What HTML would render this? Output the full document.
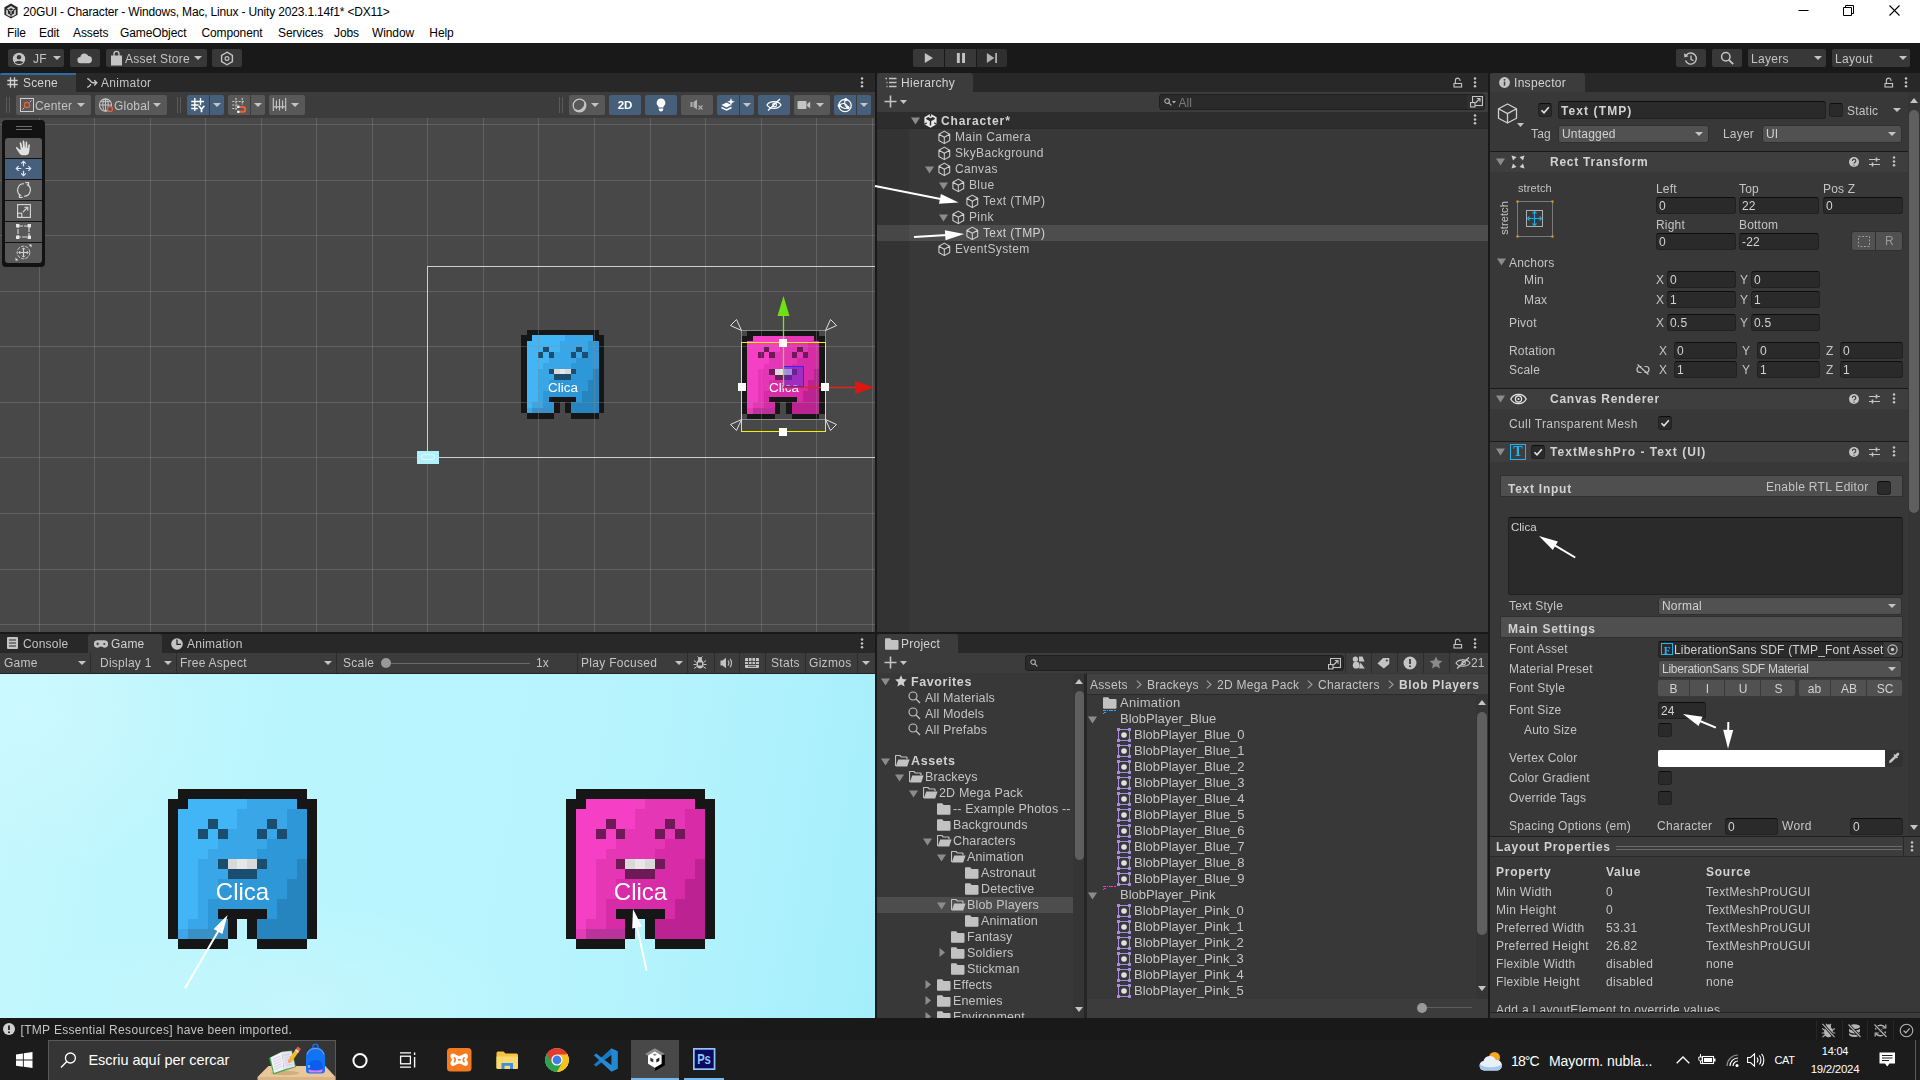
<!DOCTYPE html>
<html><head><meta charset="utf-8"><title>Unity Editor</title>
<style>
html,body{margin:0;padding:0}
body{width:1920px;height:1080px;position:relative;overflow:hidden;background:#191919;font-family:"Liberation Sans",sans-serif;font-size:12px}
body div,body span,body svg{position:absolute;box-sizing:border-box}
body span{white-space:pre}
.b{font-weight:bold}
.clip{overflow:hidden}
.u{left:0;top:0;width:1920px;height:1080px;will-change:transform}
</style></head><body>

<!-- p1_chrome -->

<div style="left:0px;top:0px;width:1920px;height:43px;background:#ffffff;"></div>
<svg style="left:3px;top:3px;" width="16" height="16" viewBox="0 0 16 16"><path d="M8 0.6L14.6 4.3V11.7L8 15.4L1.4 11.7V4.3Z" fill="#2a2a2a"/><path d="M8 3L12.3 5.5 10.6 6.5 8 5 5.4 6.5 3.7 5.5Z M3.2 6.4L4.9 7.4V10.4L7.5 11.9V13.9L3.2 11.4Z M12.8 6.4V11.4L8.5 13.9V11.9L11.1 10.4V7.4Z" fill="#d8d8d8"/><path d="M8 8.2L5.6 6.8 M8 8.2L10.4 6.8 M8 8.2V11" stroke="#d8d8d8" stroke-width="1"/></svg>
<span class="lcd" style="left:23px;top:4px;color:#000;font-size:12px;line-height:16px;letter-spacing:-0.17px;">20GUI - Character - Windows, Mac, Linux - Unity 2023.1.14f1* &lt;DX11&gt;</span>
<span class="lcd" style="left:7px;top:25px;color:#000;font-size:12px;line-height:16px;width:18px;text-align:center;letter-spacing:-0.1px;">File</span>
<span class="lcd" style="left:39px;top:25px;color:#000;font-size:12px;line-height:16px;width:20px;text-align:center;letter-spacing:-0.1px;">Edit</span>
<span class="lcd" style="left:73px;top:25px;color:#000;font-size:12px;line-height:16px;width:33px;text-align:center;letter-spacing:-0.1px;">Assets</span>
<span class="lcd" style="left:120px;top:25px;color:#000;font-size:12px;line-height:16px;width:66px;text-align:center;letter-spacing:-0.1px;">GameObject</span>
<span class="lcd" style="left:200px;top:25px;color:#000;font-size:12px;line-height:16px;width:64px;text-align:center;letter-spacing:-0.1px;">Component</span>
<span class="lcd" style="left:278px;top:25px;color:#000;font-size:12px;line-height:16px;width:42px;text-align:center;letter-spacing:-0.1px;">Services</span>
<span class="lcd" style="left:334px;top:25px;color:#000;font-size:12px;line-height:16px;width:23px;text-align:center;letter-spacing:-0.1px;">Jobs</span>
<span class="lcd" style="left:371px;top:25px;color:#000;font-size:12px;line-height:16px;width:44px;text-align:center;letter-spacing:-0.1px;">Window</span>
<span class="lcd" style="left:429px;top:25px;color:#000;font-size:12px;line-height:16px;width:25px;text-align:center;letter-spacing:-0.1px;">Help</span>
<svg style="left:1798px;top:4px;" width="110" height="14" viewBox="0 0 110 14"><path d="M0.5 6.5H10.5" stroke="#000" stroke-width="1" fill="none"/><path d="M45.5 3.5H53.5V11.5H45.5Z M47.5 3.5V1.5H55.5V9.5H53.5" stroke="#000" stroke-width="1" fill="none"/><path d="M91.5 1.5L101.5 11.5M101.5 1.5L91.5 11.5" stroke="#000" stroke-width="1.1" fill="none"/></svg>
<div class="u">
<div style="left:0px;top:43px;width:1920px;height:30px;background:#191919;"></div>
<div style="left:8px;top:49px;width:56px;height:18px;background:#383838;border-radius:2px;"></div>
<svg style="left:12px;top:52px;" width="14" height="14" viewBox="0 0 14 14"><circle cx="7" cy="7" r="6.2" fill="#c4c4c4"/><circle cx="7" cy="5.3" r="2.2" fill="#383838"/><path d="M2.8 10.6C3.8 8.6 10.2 8.6 11.2 10.6C10 12.3 4 12.3 2.8 10.6Z" fill="#383838"/></svg>
<span style="left:33px;top:51px;color:#c4c4c4;font-size:12px;line-height:16px;letter-spacing:0.3px;">JF</span>
<svg style="left:53px;top:56px;" width="8" height="4" viewBox="0 0 8 4"><path d="M0 0H8L4.0 4Z" fill="#c4c4c4"/></svg>
<div style="left:70px;top:49px;width:30px;height:18px;background:#383838;border-radius:2px;"></div>
<svg style="left:77px;top:52px;" width="16" height="12" viewBox="0 0 16 12"><path d="M3.6 11.2A3.1 3.1 0 0 1 3.4 5A4.2 4.2 0 0 1 11.4 4.1A3.6 3.6 0 0 1 12.2 11.2Z" fill="#c4c4c4"/></svg>
<div style="left:106px;top:49px;width:101px;height:18px;background:#383838;border-radius:2px;"></div>
<svg style="left:110px;top:50px;" width="13" height="16" viewBox="0 0 13 16"><path d="M1 5.5H12V15.5H1Z" fill="#c4c4c4"/><path d="M4 6V3.8A2.5 2.5 0 0 1 9 3.8V6" stroke="#c4c4c4" stroke-width="1.3" fill="none"/></svg>
<span style="left:125px;top:51px;color:#c4c4c4;font-size:12px;line-height:16px;letter-spacing:0.27px;">Asset Store</span>
<svg style="left:194px;top:56px;" width="8" height="4" viewBox="0 0 8 4"><path d="M0 0H8L4.0 4Z" fill="#c4c4c4"/></svg>
<div style="left:212px;top:49px;width:30px;height:18px;background:#383838;border-radius:2px;"></div>
<svg style="left:220px;top:51px;" width="14" height="15" viewBox="0 0 14 15"><path d="M7 1.2L12.4 4.3V10.7L7 13.8L1.6 10.7V4.3Z" stroke="#c4c4c4" stroke-width="1.4" fill="none"/><circle cx="7" cy="7.5" r="1.9" stroke="#c4c4c4" stroke-width="1.2" fill="none"/></svg>
<div style="left:913px;top:49px;width:31px;height:18px;background:#383838;border-radius:2px 0 0 2px;"></div>
<div style="left:945px;top:49px;width:31px;height:18px;background:#383838;"></div>
<div style="left:977px;top:49px;width:30px;height:18px;background:#2f2f2f;border-radius:0 2px 2px 0;"></div>
<svg style="left:924px;top:52px;" width="12" height="12" viewBox="0 0 12 12"><path d="M0.800 1L9 6L0.800 11Z" fill="#c4c4c4"/></svg>
<svg style="left:956px;top:52px;" width="12" height="12" viewBox="0 0 12 12"><path d="M0.900 1H3.800V11H0.900ZM6.100 1H9V11H6.100Z" fill="#c4c4c4"/></svg>
<svg style="left:986px;top:52px;" width="12" height="12" viewBox="0 0 12 12"><path d="M0.900 1L8.400 6L0.900 11Z" fill="#b0b0b0"/><path d="M9.200 1H11V11H9.200Z" fill="#b0b0b0"/></svg>
<div style="left:1676px;top:49px;width:30px;height:18px;background:#383838;border-radius:2px;"></div>
<svg style="left:1683px;top:51px;" width="16" height="16" viewBox="0 0 16 16"><path d="M3.2 4.2A5.6 5.6 0 1 1 2.5 9.6" stroke="#c4c4c4" stroke-width="1.4" fill="none"/><path d="M1 2.2L1.4 6.6L5.6 5.2Z" fill="#c4c4c4"/><path d="M8 4.6V8.3L10.5 9.8" stroke="#c4c4c4" stroke-width="1.3" fill="none"/></svg>
<div style="left:1712px;top:49px;width:30px;height:18px;background:#383838;border-radius:2px;"></div>
<svg style="left:1720px;top:51px;" width="15" height="15" viewBox="0 0 15 15"><circle cx="5.8" cy="5.8" r="4.2" stroke="#c4c4c4" stroke-width="1.5" fill="none"/><path d="M8.8 8.8L13.2 13.2" stroke="#c4c4c4" stroke-width="1.9"/></svg>
<div style="left:1748px;top:49px;width:78px;height:18px;background:#383838;border-radius:2px;"></div>
<span style="left:1751px;top:51px;color:#c4c4c4;font-size:12px;line-height:16px;letter-spacing:0.3px;">Layers</span>
<svg style="left:1814px;top:56px;" width="8" height="4" viewBox="0 0 8 4"><path d="M0 0H8L4.0 4Z" fill="#c4c4c4"/></svg>
<div style="left:1832px;top:49px;width:78px;height:18px;background:#383838;border-radius:2px;"></div>
<span style="left:1835px;top:51px;color:#c4c4c4;font-size:12px;line-height:16px;letter-spacing:0.3px;">Layout</span>
<svg style="left:1899px;top:56px;" width="8" height="4" viewBox="0 0 8 4"><path d="M0 0H8L4.0 4Z" fill="#c4c4c4"/></svg>

<!-- p2_scene -->

<div style="left:0px;top:73px;width:875px;height:19px;background:#282828;"></div>
<div style="left:0px;top:73px;width:76px;height:19px;background:#3c3c3c;border-top:2px solid #2f6ca6;border-radius:2px 0 0 0;"></div>
<svg style="left:7px;top:77px;" width="11" height="11" viewBox="0 0 11 11"><path d="M3.5 0.300V10.700M7.500 0.300V10.700M0.300 3.500H10.700M0.300 7.500H10.700" stroke="#d0d0d0" stroke-width="1.35" fill="none"/></svg>
<span style="left:23px;top:75px;color:#d2d2d2;font-size:12px;line-height:16px;letter-spacing:0.15px;">Scene</span>
<svg style="left:86px;top:77px;" width="12" height="12" viewBox="0 0 12 12"><path d="M1.200 1.600C4.200 1.600 4 5.800 7 5.800H10.800M1.200 10.200C3 10.200 4 8.400 4.800 7.200M8.200 3.200L10.800 5.800L8.200 8.400" stroke="#c8c8c8" stroke-width="1.35" fill="none"/></svg>
<span style="left:101px;top:75px;color:#c4c4c4;font-size:12px;line-height:16px;letter-spacing:0.3px;">Animator</span>
<svg style="left:860px;top:77px;" width="4" height="12" viewBox="0 0 4 12"><circle cx="2" cy="1.6" r="1.25" fill="#c4c4c4"/><circle cx="2" cy="5.4" r="1.25" fill="#c4c4c4"/><circle cx="2" cy="9.2" r="1.25" fill="#c4c4c4"/></svg>
<div style="left:0px;top:92px;width:875px;height:26px;background:#3c3c3c;"></div>
<div style="left:6px;top:97px;width:1px;height:16px;background:#5a5a5a;"></div>
<div style="left:9px;top:97px;width:1px;height:16px;background:#5a5a5a;"></div>
<div style="left:16px;top:95px;width:75px;height:20px;background:#585858;border-radius:2px;"></div>
<svg style="left:19px;top:97px;" width="16" height="16" viewBox="0 0 16 16"><rect x="1.500" y="1.500" width="13" height="13" fill="none" stroke="#d0d0d0" stroke-width="1"/><path d="M3.500 12.500L12.500 3.500" stroke="#d0d0d0" stroke-width="0.9" stroke-dasharray="2.500 1"/><circle cx="8" cy="8" r="2.600" fill="#585858" stroke="#ef6238" stroke-width="1.2"/></svg>
<span style="left:35px;top:97.5px;color:#c4c4c4;font-size:12px;line-height:16px;letter-spacing:0.2px;">Center</span>
<svg style="left:77px;top:103px;" width="8" height="4" viewBox="0 0 8 4"><path d="M0 0H8L4.0 4Z" fill="#c4c4c4"/></svg>
<div style="left:95px;top:95px;width:72px;height:20px;background:#585858;border-radius:2px;"></div>
<svg style="left:98px;top:97px;" width="16" height="16" viewBox="0 0 16 16"><circle cx="7.500" cy="8" r="6.100" fill="none" stroke="#c4c4c4" stroke-width="1.1"/><ellipse cx="7.500" cy="8" rx="2.700" ry="6.100" fill="none" stroke="#c4c4c4" stroke-width="1"/><path d="M1.400 8H13.600M7.500 1.900V14.100M2.600 4.700H12.400" stroke="#c4c4c4" stroke-width="1" fill="none"/><circle cx="12" cy="12" r="2.500" fill="#585858" stroke="#ef6238" stroke-width="1.2"/></svg>
<span style="left:114px;top:97.5px;color:#c4c4c4;font-size:12px;line-height:16px;letter-spacing:0.2px;">Global</span>
<svg style="left:153px;top:103px;" width="8" height="4" viewBox="0 0 8 4"><path d="M0 0H8L4.0 4Z" fill="#c4c4c4"/></svg>
<div style="left:177px;top:97px;width:1px;height:16px;background:#5a5a5a;"></div>
<div style="left:180px;top:97px;width:1px;height:16px;background:#5a5a5a;"></div>
<div style="left:187px;top:95px;width:22px;height:20px;background:#46607c;border-radius:2px 0 0 2px;"></div>
<div style="left:210px;top:95px;width:14px;height:20px;background:#46607c;border-radius:0 2px 2px 0;"></div>
<svg style="left:190px;top:97px;" width="16" height="16" viewBox="0 0 16 16"><path d="M4.800 1V14M10.500 1V8.500M1.200 4.500H14M1.200 8H8.500M1.200 11.500H7.800" stroke="#fff" stroke-width="1.35" fill="none"/><path d="M8.700 8.800L11.500 12.200L14.300 8.800M11.500 12.200V15.200" stroke="#46607c" stroke-width="3.400" fill="none"/><path d="M8.700 8.800L11.500 12.200L14.300 8.800M11.500 12.200V15.200" stroke="#fff" stroke-width="1.700" fill="none"/></svg>
<svg style="left:213px;top:103px;" width="8" height="4" viewBox="0 0 8 4"><path d="M0 0H8L4.0 4Z" fill="#c4c4c4"/></svg>
<div style="left:228px;top:95px;width:22px;height:20px;background:#585858;border-radius:2px 0 0 2px;"></div>
<div style="left:251px;top:95px;width:14px;height:20px;background:#585858;border-radius:0 2px 2px 0;"></div>
<svg style="left:231px;top:97px;" width="16" height="16" viewBox="0 0 16 16"><path d="M5 1V13.500M11.300 1V8M1.200 4.500H13.800M1.200 8H8M1.200 11.500H6" stroke="#c4c4c4" stroke-width="1.2" fill="none" stroke-dasharray="2.200 1"/><path d="M8 10H11.800A2.400 2.400 0 0 1 11.800 14.800H8" stroke="#ef6238" stroke-width="1.900" fill="none"/><rect x="6.200" y="8.800" width="2.200" height="2.200" fill="#fff"/><rect x="6.200" y="13.700" width="2.200" height="2.200" fill="#fff"/></svg>
<svg style="left:254px;top:103px;" width="8" height="4" viewBox="0 0 8 4"><path d="M0 0H8L4.0 4Z" fill="#c4c4c4"/></svg>
<div style="left:269px;top:95px;width:36px;height:20px;background:#585858;border-radius:2px;"></div>
<svg style="left:272px;top:97px;" width="16" height="16" viewBox="0 0 16 16"><path d="M1.300 1V14M13.700 1V14M4.400 3.500V12M7.500 2V13.500M10.600 3.500V12M1.300 9.800H13.700" stroke="#c4c4c4" stroke-width="1.15" fill="none"/></svg>
<svg style="left:291px;top:103px;" width="8" height="4" viewBox="0 0 8 4"><path d="M0 0H8L4.0 4Z" fill="#c4c4c4"/></svg>
<div style="left:559px;top:97px;width:1px;height:16px;background:#5a5a5a;"></div>
<div style="left:562px;top:97px;width:1px;height:16px;background:#5a5a5a;"></div>
<div style="left:569px;top:95px;width:36px;height:20px;background:#585858;border-radius:2px;"></div>
<svg style="left:572px;top:98px;" width="15" height="15" viewBox="0 0 15 15"><circle cx="7.5" cy="7.5" r="6.3" fill="none" stroke="#c4c4c4" stroke-width="1.3"/><path d="M12.8 4.5A6.3 6.3 0 0 1 2.6 11.6A7 7 0 0 0 12.8 4.5Z" fill="#c4c4c4" stroke="#c4c4c4" stroke-width="1.2"/></svg>
<svg style="left:591px;top:103px;" width="8" height="4" viewBox="0 0 8 4"><path d="M0 0H8L4.0 4Z" fill="#c4c4c4"/></svg>
<div style="left:609px;top:95px;width:32px;height:20px;background:#46607c;border-radius:2px;"></div>
<span style="left:609px;top:97px;color:#fff;font-size:12px;line-height:16px;width:32px;text-align:center;font-weight:bold;font-size:11.5px;">2D</span>
<div style="left:645px;top:95px;width:32px;height:20px;background:#46607c;border-radius:2px;"></div>
<svg style="left:654px;top:97px;" width="14" height="16" viewBox="0 0 14 16"><path d="M7 1.5A4.3 4.3 0 0 1 9.5 9.3V10.5H4.5V9.3A4.3 4.3 0 0 1 7 1.5Z" fill="#fff"/><path d="M4.8 11.6H9.2V12.3A2.2 2.2 0 0 1 4.8 12.3Z" fill="#fff"/></svg>
<div style="left:681px;top:95px;width:32px;height:20px;background:#585858;border-radius:2px;"></div>
<svg style="left:690px;top:99px;" width="14" height="12" viewBox="0 0 14 12"><path d="M0.5 3H2.5V8H0.5Z M3.5 3L7 0.5V10.5L3.5 8Z" fill="#b0b0b0"/><path d="M8.5 6.5L12.5 10.5M12.5 6.5L8.5 10.5" stroke="#b0b0b0" stroke-width="1.1"/></svg>
<div style="left:717px;top:95px;width:22px;height:20px;background:#46607c;border-radius:2px 0 0 2px;"></div>
<div style="left:740px;top:95px;width:14px;height:20px;background:#46607c;border-radius:0 2px 2px 0;"></div>
<svg style="left:720px;top:98px;" width="16" height="14" viewBox="0 0 16 14"><path d="M1.5 7L6.5 4.5L11.5 7L6.5 9.5Z" fill="#fff"/><path d="M1.5 9.5L6.5 12L11.5 9.5" stroke="#fff" stroke-width="1.4" fill="none"/><path d="M11 0L12 2.8L14.8 3.8L12 4.8L11 7.6L10 4.8L7.2 3.8L10 2.8Z" fill="#fff"/></svg>
<svg style="left:743px;top:103px;" width="8" height="4" viewBox="0 0 8 4"><path d="M0 0H8L4.0 4Z" fill="#c4c4c4"/></svg>
<div style="left:758px;top:95px;width:32px;height:20px;background:#46607c;border-radius:2px;"></div>
<svg style="left:766px;top:98px;" width="16" height="14" viewBox="0 0 16 14"><path d="M1 7C3.5 2.6 12.5 2.6 15 7C12.5 11.4 3.5 11.4 1 7Z" fill="none" stroke="#fff" stroke-width="1.2"/><circle cx="8.6" cy="7" r="1.9" fill="none" stroke="#fff" stroke-width="1.1"/><path d="M2 12.5L14 1" stroke="#fff" stroke-width="1.3"/></svg>
<div style="left:794px;top:95px;width:36px;height:20px;background:#585858;border-radius:2px;"></div>
<svg style="left:797px;top:100px;" width="14" height="10" viewBox="0 0 14 10"><rect x="0.5" y="1" width="9" height="8" rx="1" fill="#c4c4c4"/><path d="M10.2 4L13.2 1.5V8.5L10.2 6Z" fill="#c4c4c4"/></svg>
<svg style="left:816px;top:103px;" width="8" height="4" viewBox="0 0 8 4"><path d="M0 0H8L4.0 4Z" fill="#c4c4c4"/></svg>
<div style="left:834px;top:95px;width:22px;height:20px;background:#46607c;border-radius:2px 0 0 2px;"></div>
<div style="left:857px;top:95px;width:14px;height:20px;background:#46607c;border-radius:0 2px 2px 0;"></div>
<svg style="left:837px;top:97px;" width="16" height="16" viewBox="0 0 16 16"><circle cx="8" cy="8.5" r="6.2" fill="none" stroke="#fff" stroke-width="1.3"/><path d="M2 8.5C5 5.5 9 5.5 11 10.5 M8.5 2.5C6.5 6 8 10 11 10.5 M2.5 8.5C6 12 9 12 11 10.5" stroke="#fff" stroke-width="1.1" fill="none"/><circle cx="8.8" cy="2.6" r="1.6" fill="#fff"/><circle cx="2.2" cy="8.6" r="1.6" fill="#fff"/><circle cx="11" cy="10.6" r="1.6" fill="#fff"/></svg>
<svg style="left:860px;top:103px;" width="8" height="4" viewBox="0 0 8 4"><path d="M0 0H8L4.0 4Z" fill="#c4c4c4"/></svg>
<div style="left:0px;top:118px;width:875px;height:514px;background:#484848;overflow:hidden;"></div>
<svg style="left:521px;top:329px;" width="85" height="91" viewBox="0 0 85 91" shape-rendering="crispEdges"><rect x="6" y="1" width="72" height="5" fill="#161616"/><rect x="0" y="6" width="11" height="6" fill="#161616"/><rect x="11" y="6" width="33" height="6" fill="#42b5f6"/><rect x="44" y="6" width="28" height="6" fill="#38a6e7"/><rect x="72" y="6" width="11" height="6" fill="#161616"/><rect x="0" y="12" width="6" height="6" fill="#161616"/><rect x="6" y="12" width="33" height="6" fill="#42b5f6"/><rect x="39" y="12" width="28" height="6" fill="#38a6e7"/><rect x="67" y="12" width="11" height="6" fill="#2e97d8"/><rect x="78" y="12" width="5" height="6" fill="#161616"/><rect x="0" y="18" width="6" height="5" fill="#161616"/><rect x="6" y="18" width="16" height="5" fill="#42b5f6"/><rect x="22" y="18" width="6" height="5" fill="#1b4e6e"/><rect x="28" y="18" width="11" height="5" fill="#42b5f6"/><rect x="39" y="18" width="16" height="5" fill="#38a6e7"/><rect x="55" y="18" width="6" height="5" fill="#1b4e6e"/><rect x="61" y="18" width="6" height="5" fill="#38a6e7"/><rect x="67" y="18" width="11" height="5" fill="#2e97d8"/><rect x="78" y="18" width="5" height="5" fill="#161616"/><rect x="0" y="23" width="6" height="6" fill="#161616"/><rect x="6" y="23" width="11" height="6" fill="#42b5f6"/><rect x="17" y="23" width="5" height="6" fill="#1b4e6e"/><rect x="22" y="23" width="6" height="6" fill="#42b5f6"/><rect x="28" y="23" width="5" height="6" fill="#1b4e6e"/><rect x="33" y="23" width="17" height="6" fill="#38a6e7"/><rect x="50" y="23" width="5" height="6" fill="#1b4e6e"/><rect x="55" y="23" width="6" height="6" fill="#38a6e7"/><rect x="61" y="23" width="6" height="6" fill="#1b4e6e"/><rect x="67" y="23" width="11" height="6" fill="#2e97d8"/><rect x="78" y="23" width="5" height="6" fill="#161616"/><rect x="0" y="29" width="6" height="5" fill="#161616"/><rect x="6" y="29" width="22" height="5" fill="#42b5f6"/><rect x="28" y="29" width="27" height="5" fill="#38a6e7"/><rect x="55" y="29" width="23" height="5" fill="#2e97d8"/><rect x="78" y="29" width="5" height="5" fill="#161616"/><rect x="0" y="34" width="6" height="6" fill="#161616"/><rect x="6" y="34" width="16" height="6" fill="#42b5f6"/><rect x="22" y="34" width="28" height="6" fill="#38a6e7"/><rect x="50" y="34" width="28" height="6" fill="#2e97d8"/><rect x="78" y="34" width="5" height="6" fill="#161616"/><rect x="0" y="40" width="6" height="5" fill="#161616"/><rect x="6" y="40" width="11" height="5" fill="#42b5f6"/><rect x="17" y="40" width="11" height="5" fill="#38a6e7"/><rect x="28" y="40" width="5" height="5" fill="#1b4e6e"/><rect x="33" y="40" width="6" height="5" fill="#d9d9d9"/><rect x="39" y="40" width="5" height="5" fill="#e7e7e7"/><rect x="44" y="40" width="6" height="5" fill="#d9d9d9"/><rect x="50" y="40" width="5" height="5" fill="#1b4e6e"/><rect x="55" y="40" width="17" height="5" fill="#2e97d8"/><rect x="72" y="40" width="6" height="5" fill="#2684be"/><rect x="78" y="40" width="5" height="5" fill="#161616"/><rect x="0" y="45" width="6" height="6" fill="#161616"/><rect x="6" y="45" width="11" height="6" fill="#42b5f6"/><rect x="17" y="45" width="16" height="6" fill="#38a6e7"/><rect x="33" y="45" width="17" height="6" fill="#1b4e6e"/><rect x="50" y="45" width="22" height="6" fill="#2e97d8"/><rect x="72" y="45" width="6" height="6" fill="#2684be"/><rect x="78" y="45" width="5" height="6" fill="#161616"/><rect x="0" y="51" width="6" height="5" fill="#161616"/><rect x="6" y="51" width="11" height="5" fill="#42b5f6"/><rect x="17" y="51" width="11" height="5" fill="#38a6e7"/><rect x="28" y="51" width="39" height="5" fill="#2e97d8"/><rect x="67" y="51" width="11" height="5" fill="#2684be"/><rect x="78" y="51" width="5" height="5" fill="#161616"/><rect x="0" y="56" width="6" height="6" fill="#161616"/><rect x="6" y="56" width="11" height="6" fill="#42b5f6"/><rect x="17" y="56" width="11" height="6" fill="#38a6e7"/><rect x="28" y="56" width="39" height="6" fill="#2e97d8"/><rect x="67" y="56" width="11" height="6" fill="#2684be"/><rect x="78" y="56" width="5" height="6" fill="#161616"/><rect x="0" y="62" width="6" height="6" fill="#161616"/><rect x="6" y="62" width="11" height="6" fill="#42b5f6"/><rect x="17" y="62" width="5" height="6" fill="#38a6e7"/><rect x="22" y="62" width="39" height="6" fill="#2e97d8"/><rect x="61" y="62" width="17" height="6" fill="#2684be"/><rect x="78" y="62" width="5" height="6" fill="#161616"/><rect x="0" y="68" width="6" height="5" fill="#161616"/><rect x="6" y="68" width="11" height="5" fill="#42b5f6"/><rect x="17" y="68" width="5" height="5" fill="#38a6e7"/><rect x="22" y="68" width="6" height="5" fill="#2e97d8"/><rect x="28" y="68" width="27" height="5" fill="#161616"/><rect x="55" y="68" width="6" height="5" fill="#2e97d8"/><rect x="61" y="68" width="17" height="5" fill="#2684be"/><rect x="78" y="68" width="5" height="5" fill="#161616"/><rect x="0" y="73" width="6" height="6" fill="#161616"/><rect x="6" y="73" width="5" height="6" fill="#42b5f6"/><rect x="11" y="73" width="11" height="6" fill="#38a6e7"/><rect x="22" y="73" width="11" height="6" fill="#2e97d8"/><rect x="33" y="73" width="6" height="6" fill="#161616"/><rect x="44" y="73" width="6" height="6" fill="#161616"/><rect x="50" y="73" width="28" height="6" fill="#2684be"/><rect x="78" y="73" width="5" height="6" fill="#161616"/><rect x="0" y="79" width="6" height="5" fill="#161616"/><rect x="6" y="79" width="5" height="5" fill="#3ea6e4"/><rect x="11" y="79" width="22" height="5" fill="#3990c6"/><rect x="33" y="79" width="6" height="5" fill="#161616"/><rect x="44" y="79" width="6" height="5" fill="#161616"/><rect x="50" y="79" width="28" height="5" fill="#2684be"/><rect x="78" y="79" width="5" height="5" fill="#161616"/><rect x="6" y="84" width="27" height="6" fill="#161616"/><rect x="50" y="84" width="28" height="6" fill="#161616"/></svg>
<svg style="left:741px;top:330px;" width="85" height="91" viewBox="0 0 85 91" shape-rendering="crispEdges"><rect x="6" y="0" width="72" height="6" fill="#161616"/><rect x="1" y="6" width="11" height="5" fill="#161616"/><rect x="12" y="6" width="33" height="5" fill="#f540c5"/><rect x="45" y="6" width="28" height="5" fill="#e536b5"/><rect x="73" y="6" width="11" height="5" fill="#161616"/><rect x="1" y="11" width="5" height="6" fill="#161616"/><rect x="6" y="11" width="33" height="6" fill="#f540c5"/><rect x="39" y="11" width="28" height="6" fill="#e536b5"/><rect x="67" y="11" width="11" height="6" fill="#d82ba8"/><rect x="78" y="11" width="6" height="6" fill="#161616"/><rect x="1" y="17" width="5" height="5" fill="#161616"/><rect x="6" y="17" width="17" height="5" fill="#f540c5"/><rect x="23" y="17" width="5" height="5" fill="#6e1a56"/><rect x="28" y="17" width="11" height="5" fill="#f540c5"/><rect x="39" y="17" width="17" height="5" fill="#e536b5"/><rect x="56" y="17" width="6" height="5" fill="#6e1a56"/><rect x="62" y="17" width="5" height="5" fill="#e536b5"/><rect x="67" y="17" width="11" height="5" fill="#d82ba8"/><rect x="78" y="17" width="6" height="5" fill="#161616"/><rect x="1" y="22" width="5" height="6" fill="#161616"/><rect x="6" y="22" width="11" height="6" fill="#f540c5"/><rect x="17" y="22" width="6" height="6" fill="#6e1a56"/><rect x="23" y="22" width="5" height="6" fill="#f540c5"/><rect x="28" y="22" width="6" height="6" fill="#6e1a56"/><rect x="34" y="22" width="17" height="6" fill="#e536b5"/><rect x="51" y="22" width="5" height="6" fill="#6e1a56"/><rect x="56" y="22" width="6" height="6" fill="#e536b5"/><rect x="62" y="22" width="5" height="6" fill="#6e1a56"/><rect x="67" y="22" width="11" height="6" fill="#d82ba8"/><rect x="78" y="22" width="6" height="6" fill="#161616"/><rect x="1" y="28" width="5" height="6" fill="#161616"/><rect x="6" y="28" width="22" height="6" fill="#f540c5"/><rect x="28" y="28" width="28" height="6" fill="#e536b5"/><rect x="56" y="28" width="22" height="6" fill="#d82ba8"/><rect x="78" y="28" width="6" height="6" fill="#161616"/><rect x="1" y="34" width="5" height="5" fill="#161616"/><rect x="6" y="34" width="17" height="5" fill="#f540c5"/><rect x="23" y="34" width="28" height="5" fill="#e536b5"/><rect x="51" y="34" width="27" height="5" fill="#d82ba8"/><rect x="78" y="34" width="6" height="5" fill="#161616"/><rect x="1" y="39" width="5" height="6" fill="#161616"/><rect x="6" y="39" width="11" height="6" fill="#f540c5"/><rect x="17" y="39" width="11" height="6" fill="#e536b5"/><rect x="28" y="39" width="6" height="6" fill="#6e1a56"/><rect x="34" y="39" width="5" height="6" fill="#d9d9d9"/><rect x="39" y="39" width="6" height="6" fill="#e7e7e7"/><rect x="45" y="39" width="6" height="6" fill="#d9d9d9"/><rect x="51" y="39" width="5" height="6" fill="#6e1a56"/><rect x="56" y="39" width="17" height="6" fill="#d82ba8"/><rect x="73" y="39" width="5" height="6" fill="#bc2291"/><rect x="78" y="39" width="6" height="6" fill="#161616"/><rect x="1" y="45" width="5" height="5" fill="#161616"/><rect x="6" y="45" width="11" height="5" fill="#f540c5"/><rect x="17" y="45" width="17" height="5" fill="#e536b5"/><rect x="34" y="45" width="17" height="5" fill="#6e1a56"/><rect x="51" y="45" width="22" height="5" fill="#d82ba8"/><rect x="73" y="45" width="5" height="5" fill="#bc2291"/><rect x="78" y="45" width="6" height="5" fill="#161616"/><rect x="1" y="50" width="5" height="6" fill="#161616"/><rect x="6" y="50" width="11" height="6" fill="#f540c5"/><rect x="17" y="50" width="11" height="6" fill="#e536b5"/><rect x="28" y="50" width="39" height="6" fill="#d82ba8"/><rect x="67" y="50" width="11" height="6" fill="#bc2291"/><rect x="78" y="50" width="6" height="6" fill="#161616"/><rect x="1" y="56" width="5" height="5" fill="#161616"/><rect x="6" y="56" width="11" height="5" fill="#f540c5"/><rect x="17" y="56" width="11" height="5" fill="#e536b5"/><rect x="28" y="56" width="39" height="5" fill="#d82ba8"/><rect x="67" y="56" width="11" height="5" fill="#bc2291"/><rect x="78" y="56" width="6" height="5" fill="#161616"/><rect x="1" y="61" width="5" height="6" fill="#161616"/><rect x="6" y="61" width="11" height="6" fill="#f540c5"/><rect x="17" y="61" width="6" height="6" fill="#e536b5"/><rect x="23" y="61" width="39" height="6" fill="#d82ba8"/><rect x="62" y="61" width="16" height="6" fill="#bc2291"/><rect x="78" y="61" width="6" height="6" fill="#161616"/><rect x="1" y="67" width="5" height="5" fill="#161616"/><rect x="6" y="67" width="11" height="5" fill="#f540c5"/><rect x="17" y="67" width="6" height="5" fill="#e536b5"/><rect x="23" y="67" width="5" height="5" fill="#d82ba8"/><rect x="28" y="67" width="28" height="5" fill="#161616"/><rect x="56" y="67" width="6" height="5" fill="#d82ba8"/><rect x="62" y="67" width="16" height="5" fill="#bc2291"/><rect x="78" y="67" width="6" height="5" fill="#161616"/><rect x="1" y="72" width="5" height="6" fill="#161616"/><rect x="6" y="72" width="6" height="6" fill="#f540c5"/><rect x="12" y="72" width="11" height="6" fill="#e536b5"/><rect x="23" y="72" width="11" height="6" fill="#d82ba8"/><rect x="34" y="72" width="5" height="6" fill="#161616"/><rect x="45" y="72" width="6" height="6" fill="#161616"/><rect x="51" y="72" width="27" height="6" fill="#bc2291"/><rect x="78" y="72" width="6" height="6" fill="#161616"/><rect x="1" y="78" width="5" height="6" fill="#161616"/><rect x="6" y="78" width="6" height="6" fill="#e23cb6"/><rect x="12" y="78" width="22" height="6" fill="#b9339b"/><rect x="34" y="78" width="5" height="6" fill="#161616"/><rect x="45" y="78" width="6" height="6" fill="#161616"/><rect x="51" y="78" width="27" height="6" fill="#bc2291"/><rect x="78" y="78" width="6" height="6" fill="#161616"/><rect x="6" y="84" width="28" height="5" fill="#161616"/><rect x="51" y="84" width="27" height="5" fill="#161616"/></svg>
<span style="left:522px;top:377.5px;color:#fff;font-size:13.4px;line-height:20px;width:82px;text-align:center;">Clica</span>
<span style="left:743px;top:377.5px;color:#fff;font-size:13.4px;line-height:20px;width:82px;text-align:center;">Clica</span>
<svg style="left:0px;top:118px;" width="875" height="514" viewBox="0 0 875 514"><g stroke="#8c8c8c" stroke-opacity="0.36" stroke-width="1" fill="none" shape-rendering="crispEdges"><path d="M39.5 0V514"/><path d="M94.5 0V514"/><path d="M150.5 0V514"/><path d="M205.5 0V514"/><path d="M261.5 0V514"/><path d="M316.5 0V514"/><path d="M372.5 0V514"/><path d="M427.5 0V514"/><path d="M483.5 0V514"/><path d="M538.5 0V514"/><path d="M594.5 0V514"/><path d="M650.5 0V514"/><path d="M705.5 0V514"/><path d="M761.5 0V514"/><path d="M816.5 0V514"/><path d="M872.5 0V514"/><path d="M0 6.5H875"/><path d="M0 62.5H875"/><path d="M0 117.5H875"/><path d="M0 173.5H875"/><path d="M0 228.5H875"/><path d="M0 284.5H875"/><path d="M0 339.5H875"/><path d="M0 395.5H875"/><path d="M0 451.5H875"/><path d="M0 506.5H875"/></g></svg>
<svg style="left:420px;top:260px;" width="455" height="210" viewBox="0 0 455 210"><path d="M455 6.5H7.5V197.5H455" stroke="#d0d0d0" stroke-width="1" fill="none" shape-rendering="crispEdges"/></svg>
<div style="left:417px;top:451px;width:22px;height:13px;background:#b2f1fb;"></div>
<div style="left:421px;top:454px;width:14px;height:6px;border:1px solid #dcfbff;border-radius:3px;"></div>
<svg style="left:725px;top:290px;" width="150" height="150" viewBox="0 0 150 150"><g shape-rendering="crispEdges" fill="none"><rect x="16.5" y="40.5" width="84" height="89" stroke="#8a8a8a"/><rect x="16.5" y="52.5" width="84" height="89" stroke="#f5f000"/></g><g stroke="#e0e0e0" stroke-width="1" fill="none"><path d="M16.5 40.5L5.5 35.5L11.5 29.5Z"/><path d="M100.5 40.5L111.5 35.5L105.5 29.5Z"/><path d="M16.5 129.5L5.5 134.5L11.5 140.5Z"/><path d="M100.5 129.5L111.5 134.5L105.5 140.5Z"/></g><rect x="58.5" y="76.5" width="20" height="20" fill="#5a30e0" fill-opacity="0.45" stroke="#2a2aff"/><path d="M58.5 97V24" stroke="#7be330" stroke-width="1.3"/><path d="M58.5 6L64.5 26H52.5Z" fill="#6fe016"/><path d="M58 97.5H132" stroke="#e0261c" stroke-width="1.3"/><path d="M149 97.5L130 91V104Z" fill="#e0160e"/><g fill="#fff" shape-rendering="crispEdges"><rect x="54" y="49" width="8" height="8"/><rect x="13" y="93" width="8" height="8"/><rect x="96" y="93" width="8" height="8"/><rect x="54" y="138" width="8" height="8"/></g></svg>
<div style="left:2px;top:120px;width:43px;height:147px;background:#121212;border-radius:4px;"></div>
<div style="left:16px;top:126px;width:16px;height:1px;background:#6e6e6e;"></div>
<div style="left:16px;top:129px;width:16px;height:1px;background:#6e6e6e;"></div>
<div style="left:5px;top:138px;width:37px;height:20px;background:#585858;border-radius:3px 3px 0 0"></div>
<div style="left:5px;top:159px;width:37px;height:20px;background:#46607c;border-radius:0"></div>
<div style="left:5px;top:180px;width:37px;height:20px;background:#585858;border-radius:0"></div>
<div style="left:5px;top:201px;width:37px;height:20px;background:#585858;border-radius:0"></div>
<div style="left:5px;top:222px;width:37px;height:20px;background:#585858;border-radius:0"></div>
<div style="left:5px;top:243px;width:37px;height:20px;background:#585858;border-radius:0 0 3px 3px"></div>
<svg style="left:15px;top:140px;" width="17" height="16" viewBox="0 0 17 16"><path d="M4.2 9.2L2.2 7.2C1.2 6.4 0.4 7.6 1.2 8.6L4.5 13.5C5.3 14.7 6.3 15.3 7.8 15.3H10.6C12.8 15.3 14 13.8 14.2 11.8L14.9 5.2C15 4 13.6 3.8 13.4 5L12.8 8.2H12.4L12.2 2.4C12.2 1.2 10.6 1.2 10.6 2.4L10.4 7.8H10L9.3 1.4C9.2 0.2 7.6 0.4 7.7 1.6L8 7.8H7.6L6.2 2.8C5.9 1.7 4.4 2.1 4.7 3.3L5.8 9.8Z" fill="#e0e0e0"/></svg>
<svg style="left:15px;top:160px;" width="17" height="17" viewBox="0 0 17 17"><path d="M8.500 1.500V6.300M8.500 10.700V15.500M1.500 8.500H6.300M10.700 8.500H15.500" stroke="#dde6f0" stroke-width="1.2"/><path d="M6.200 3.600L8.500 1.300L10.800 3.600M6.200 13.400L8.500 15.700L10.800 13.400M3.600 6.200L1.300 8.500L3.600 10.800M13.400 6.200L15.700 8.500L13.400 10.800" stroke="#dde6f0" stroke-width="1.2" fill="none"/></svg>
<svg style="left:16px;top:182px;" width="16" height="16" viewBox="0 0 16 16"><path d="M5.200 13.600A6.200 6.200 0 0 1 8 1.800M10.800 2.400A6.200 6.200 0 0 1 8 14.200" stroke="#d8d8d8" stroke-width="1.15" fill="none"/><path d="M9.300 0.600H12.600V3.900M6.700 15.400H3.400V12.100" stroke="#d8d8d8" stroke-width="1.15" fill="none"/></svg>
<svg style="left:17px;top:204px;" width="14" height="14" viewBox="0 0 14 14"><rect x="0.600" y="0.600" width="12.800" height="12.800" fill="none" stroke="#d8d8d8" stroke-width="1.1"/><rect x="0.600" y="9.200" width="4.200" height="4.200" fill="none" stroke="#d8d8d8" stroke-width="1.1"/><path d="M6 8L10.800 3.200M7.300 3.200H10.800V6.700" stroke="#d8d8d8" stroke-width="1.1" fill="none"/></svg>
<svg style="left:16px;top:224px;" width="15" height="15" viewBox="0 0 15 15"><path d="M2 2H13V13H2Z" stroke="#d8d8d8" stroke-width="1.1" fill="none" stroke-dasharray="5 1"/><g fill="#e6e6e6"><rect x="0" y="0" width="3.4" height="3.4"/><rect x="11.6" y="0" width="3.4" height="3.4"/><rect x="0" y="11.6" width="3.4" height="3.4"/><rect x="11.6" y="11.6" width="3.4" height="3.4"/></g></svg>
<svg style="left:15px;top:244px;" width="17" height="17" viewBox="0 0 17 17"><circle cx="8.500" cy="8.500" r="6.300" stroke="#d0d0d0" stroke-width="1" fill="none" stroke-dasharray="3.200 1.200"/><path d="M8.500 4V13M4 8.500H13" stroke="#d0d0d0" stroke-width="1.200"/><path d="M7 5.300L8.500 3.800L10 5.300M7 11.700L8.500 13.200L10 11.700M5.300 7L3.800 8.500L5.300 10M11.700 7L13.200 8.500L11.700 10" stroke="#d0d0d0" stroke-width="1" fill="none"/><path d="M13.500 0.500H16.500V3.500Z M0.500 13.500V16.500H3.500Z" fill="#e0e0e0"/></svg>

<!-- p3_hier -->

<div style="left:877px;top:73px;width:611px;height:19px;background:#282828;"></div>
<div style="left:877px;top:73px;width:96px;height:19px;background:#3c3c3c;border-radius:3px 3px 0 0;"></div>
<svg style="left:885px;top:77px;" width="12" height="11" viewBox="0 0 12 11"><path d="M4 1.5H11.5M4 5.5H11.5M4 9.5H11.5" stroke="#c4c4c4" stroke-width="1.3"/><path d="M0.5 1.5H2M1.5 5.5H2.5M1.5 9.5H2.5" stroke="#c4c4c4" stroke-width="1.3"/></svg>
<span style="left:901px;top:75px;color:#d2d2d2;font-size:12px;line-height:16px;letter-spacing:0.3px;">Hierarchy</span>
<svg style="left:1453px;top:77px;" width="10" height="11" viewBox="0 0 10 11"><rect x="1" y="6.5" width="7.600" height="3.500" fill="none" stroke="#c4c4c4" stroke-width="1.1"/><path d="M2.4 6.500V3.400A2.300 2.300 0 0 1 7 3.400V3.900" stroke="#c4c4c4" stroke-width="1.1" fill="none"/></svg>
<svg style="left:1473px;top:77px;" width="4" height="12" viewBox="0 0 4 12"><circle cx="2" cy="1.6" r="1.25" fill="#c4c4c4"/><circle cx="2" cy="5.4" r="1.25" fill="#c4c4c4"/><circle cx="2" cy="9.2" r="1.25" fill="#c4c4c4"/></svg>
<div style="left:877px;top:92px;width:611px;height:20px;background:#3c3c3c;"></div>
<svg style="left:884px;top:95px;" width="13" height="13" viewBox="0 0 13 13"><path d="M6.5 0.5V12.5M0.5 6.5H12.5" stroke="#c4c4c4" stroke-width="1.6"/></svg>
<svg style="left:900px;top:100px;" width="7" height="4" viewBox="0 0 7 4"><path d="M0 0H7L3.5 4Z" fill="#c4c4c4"/></svg>
<div style="left:1159px;top:94px;width:326px;height:16px;background:#2a2a2a;border-radius:3px;border:1px solid #1f1f1f;"></div>
<div style="left:1467px;top:95px;width:17px;height:14px;background:#303030;border-radius:0 2px 2px 0;"></div>
<svg style="left:1164px;top:98px;" width="8" height="8" viewBox="0 0 9 9"><circle cx="3.5" cy="3.5" r="2.6" stroke="#b0b0b0" stroke-width="1.2" fill="none"/><path d="M5.4 5.4L8.3 8.3" stroke="#b0b0b0" stroke-width="1.3"/></svg>
<svg style="left:1171.5px;top:101px;" width="4" height="3" viewBox="0 0 4 3"><path d="M0 0H4L2 2.500Z" fill="#b0b0b0"/></svg>
<span style="left:1178.5px;top:94.5px;color:#7c7c7c;font-size:12px;line-height:16px;">All</span>
<svg style="left:1470px;top:96px;" width="13" height="12" viewBox="0 0 13 12"><rect x="0.550" y="6.550" width="4.400" height="4.400" fill="none" stroke="#c4c4c4" stroke-width="1.1"/><path d="M2.550 6.500V0.550H12.450V9.450H5" fill="none" stroke="#c4c4c4" stroke-width="1.1"/><path d="M5.500 7L10 2.500M6.800 2.500H10V5.700" stroke="#c4c4c4" stroke-width="1.1" fill="none"/></svg>
<div style="left:877px;top:112px;width:611px;height:520px;background:#383838;"></div>
<div style="left:877px;top:112px;width:32px;height:520px;background:#333333;"></div>
<div style="left:877px;top:112px;width:611px;height:16px;background:#2d2d2d;"></div>
<div style="left:877px;top:128px;width:611px;height:1px;background:#2a2a2a;"></div>
<svg style="left:911px;top:117px;" width="9" height="8" viewBox="0 0 9 8"><path d="M0 0.5H9L4.5 7.5Z" fill="#8c8c8c"/></svg>
<svg style="left:923px;top:113px;" width="15" height="15" viewBox="0 0 15 15"><path d="M7.5 0.8L13.6 4.3V11.2L7.5 14.7L1.4 11.2V4.3Z" fill="#e8e8e8"/><path d="M7.5 7.8L3.6 5.5V4.9L5.3 3.9L7.5 5.2L9.7 3.9L11.4 4.9V5.5Z" fill="#2d2d2d"/><path d="M7.5 7.8V12.4M3.4 5.4L7.5 7.8L11.6 5.4" stroke="#2d2d2d" stroke-width="1.4" fill="none"/><path d="M7.5 0.8V3.4M1.4 11.2L3.8 9.8M13.6 11.2L11.2 9.8" stroke="#2d2d2d" stroke-width="1.3"/></svg>
<span style="left:941px;top:113px;color:#d2d2d2;font-size:12px;line-height:16px;font-weight:bold;letter-spacing:0.9px;">Character*</span>
<svg style="left:1473px;top:114px;" width="4" height="12" viewBox="0 0 4 12"><circle cx="2" cy="1.6" r="1.25" fill="#c4c4c4"/><circle cx="2" cy="5.4" r="1.25" fill="#c4c4c4"/><circle cx="2" cy="9.2" r="1.25" fill="#c4c4c4"/></svg>
<svg style="left:937px;top:130px;" width="14" height="15" viewBox="0 0 14 15"><path d="M7.300 1.100L12.700 4.200V10.500L7.300 13.600L1.900 10.500V4.200Z M1.900 4.200L7.300 7.300L12.700 4.200 M7.300 7.300V13.600" stroke="#d0d0d0" stroke-width="1.050" fill="none" stroke-linejoin="round"/></svg>
<span style="left:955px;top:128.5px;color:#c4c4c4;font-size:12px;line-height:16px;letter-spacing:0.36px;">Main Camera</span>
<svg style="left:937px;top:146px;" width="14" height="15" viewBox="0 0 14 15"><path d="M7.300 1.100L12.700 4.200V10.500L7.300 13.600L1.900 10.500V4.200Z M1.900 4.200L7.300 7.300L12.700 4.200 M7.300 7.300V13.600" stroke="#d0d0d0" stroke-width="1.050" fill="none" stroke-linejoin="round"/></svg>
<span style="left:955px;top:144.5px;color:#c4c4c4;font-size:12px;line-height:16px;letter-spacing:0.36px;">SkyBackground</span>
<svg style="left:925px;top:166px;" width="9" height="8" viewBox="0 0 9 8"><path d="M0 0.5H9L4.5 7.5Z" fill="#8c8c8c"/></svg>
<svg style="left:937px;top:162px;" width="14" height="15" viewBox="0 0 14 15"><path d="M7.300 1.100L12.700 4.200V10.500L7.300 13.600L1.900 10.500V4.200Z M1.900 4.200L7.300 7.300L12.700 4.200 M7.300 7.300V13.600" stroke="#d0d0d0" stroke-width="1.050" fill="none" stroke-linejoin="round"/></svg>
<span style="left:955px;top:160.5px;color:#c4c4c4;font-size:12px;line-height:16px;letter-spacing:0.36px;">Canvas</span>
<svg style="left:939px;top:182px;" width="9" height="8" viewBox="0 0 9 8"><path d="M0 0.5H9L4.5 7.5Z" fill="#8c8c8c"/></svg>
<svg style="left:951px;top:178px;" width="14" height="15" viewBox="0 0 14 15"><path d="M7.300 1.100L12.700 4.200V10.500L7.300 13.600L1.900 10.500V4.200Z M1.900 4.200L7.300 7.300L12.700 4.200 M7.300 7.300V13.600" stroke="#d0d0d0" stroke-width="1.050" fill="none" stroke-linejoin="round"/></svg>
<span style="left:969px;top:176.5px;color:#c4c4c4;font-size:12px;line-height:16px;letter-spacing:0.36px;">Blue</span>
<svg style="left:965px;top:194px;" width="14" height="15" viewBox="0 0 14 15"><path d="M7.300 1.100L12.700 4.200V10.500L7.300 13.600L1.900 10.500V4.200Z M1.900 4.200L7.300 7.300L12.700 4.200 M7.300 7.300V13.600" stroke="#d0d0d0" stroke-width="1.050" fill="none" stroke-linejoin="round"/></svg>
<span style="left:983px;top:192.5px;color:#c4c4c4;font-size:12px;line-height:16px;letter-spacing:0.36px;">Text (TMP)</span>
<svg style="left:939px;top:214px;" width="9" height="8" viewBox="0 0 9 8"><path d="M0 0.5H9L4.5 7.5Z" fill="#8c8c8c"/></svg>
<svg style="left:951px;top:210px;" width="14" height="15" viewBox="0 0 14 15"><path d="M7.300 1.100L12.700 4.200V10.500L7.300 13.600L1.900 10.500V4.200Z M1.900 4.200L7.300 7.300L12.700 4.200 M7.300 7.300V13.600" stroke="#d0d0d0" stroke-width="1.050" fill="none" stroke-linejoin="round"/></svg>
<span style="left:969px;top:208.5px;color:#c4c4c4;font-size:12px;line-height:16px;letter-spacing:0.36px;">Pink</span>
<div style="left:877px;top:225px;width:611px;height:16px;background:#4d4d4d;"></div>
<div style="left:877px;top:225px;width:32px;height:16px;background:#474747;"></div>
<svg style="left:965px;top:226px;" width="14" height="15" viewBox="0 0 14 15"><path d="M7.300 1.100L12.700 4.200V10.500L7.300 13.600L1.900 10.500V4.200Z M1.900 4.200L7.300 7.300L12.700 4.200 M7.300 7.300V13.600" stroke="#d0d0d0" stroke-width="1.050" fill="none" stroke-linejoin="round"/></svg>
<span style="left:983px;top:224.5px;color:#d2d2d2;font-size:12px;line-height:16px;letter-spacing:0.36px;">Text (TMP)</span>
<svg style="left:937px;top:242px;" width="14" height="15" viewBox="0 0 14 15"><path d="M7.300 1.100L12.700 4.200V10.500L7.300 13.600L1.900 10.500V4.200Z M1.900 4.200L7.300 7.300L12.700 4.200 M7.300 7.300V13.600" stroke="#d0d0d0" stroke-width="1.050" fill="none" stroke-linejoin="round"/></svg>
<span style="left:955px;top:240.5px;color:#c4c4c4;font-size:12px;line-height:16px;letter-spacing:0.36px;">EventSystem</span>
<svg style="left:865px;top:176px;" width="104" height="37" viewBox="0 0 104 37"><path d="M10 10.0L76.9 23.3" stroke="#fff" stroke-width="2"/><path d="M93.6 26.6L74.0 27.8L75.9 18.0Z" fill="#fff"/></svg>
<svg style="left:904px;top:224px;" width="70" height="23" viewBox="0 0 70 23"><path d="M10 13.1L43.2 11.0" stroke="#fff" stroke-width="2"/><path d="M60.2 10.0L41.5 16.2L40.9 6.2Z" fill="#fff"/></svg>

<!-- p4_game -->

<div style="left:0px;top:634px;width:875px;height:19px;background:#282828;"></div>
<div style="left:88px;top:634px;width:74px;height:19px;background:#3c3c3c;border-radius:3px 3px 0 0;"></div>
<svg style="left:7px;top:637px;" width="11" height="12" viewBox="0 0 11 12"><rect x="0" y="0" width="11" height="12" rx="1" fill="#c4c4c4"/><path d="M2 3H9M2 6H9M2 9H9" stroke="#282828" stroke-width="1.2"/></svg>
<span style="left:23px;top:636px;color:#c4c4c4;font-size:12px;line-height:16px;letter-spacing:0.2px;">Console</span>
<svg style="left:94px;top:640px;" width="14" height="8" viewBox="0 0 14 8"><path d="M3.6 0.3H10.4A3.6 3.6 0 0 1 10.4 7.7C9.2 7.7 8.6 6.6 7 6.6C5.4 6.6 4.8 7.7 3.6 7.7A3.6 3.6 0 0 1 3.6 0.3Z" fill="#c4c4c4"/><path d="M2.2 3.9H5.2M3.7 2.4V5.4" stroke="#3c3c3c" stroke-width="1"/><circle cx="10.3" cy="3.9" r="1" fill="#3c3c3c"/></svg>
<span style="left:111px;top:636px;color:#d2d2d2;font-size:12px;line-height:16px;letter-spacing:0.2px;">Game</span>
<svg style="left:171px;top:638px;" width="12" height="12" viewBox="0 0 12 12"><circle cx="6" cy="6" r="5.8" fill="#c4c4c4"/><path d="M6 1.6V6.3H10" stroke="#282828" stroke-width="1.3" fill="none"/></svg>
<span style="left:187px;top:636px;color:#c4c4c4;font-size:12px;line-height:16px;letter-spacing:0.25px;">Animation</span>
<svg style="left:860px;top:638px;" width="4" height="12" viewBox="0 0 4 12"><circle cx="2" cy="1.6" r="1.25" fill="#c4c4c4"/><circle cx="2" cy="5.4" r="1.25" fill="#c4c4c4"/><circle cx="2" cy="9.2" r="1.25" fill="#c4c4c4"/></svg>
<div style="left:0px;top:653px;width:875px;height:21px;background:#3c3c3c;border-bottom:1px solid #232323;"></div>
<span style="left:4px;top:655px;color:#c4c4c4;font-size:12px;line-height:16px;letter-spacing:0.25px;">Game</span>
<svg style="left:78px;top:661px;" width="8" height="4" viewBox="0 0 8 4"><path d="M0 0H8L4.0 4Z" fill="#c4c4c4"/></svg>
<div style="left:90px;top:653px;width:1px;height:20px;background:#2c2c2c;"></div>
<span style="left:100px;top:655px;color:#c4c4c4;font-size:12px;line-height:16px;letter-spacing:0.25px;">Display 1</span>
<svg style="left:164px;top:661px;" width="8" height="4" viewBox="0 0 8 4"><path d="M0 0H8L4.0 4Z" fill="#c4c4c4"/></svg>
<div style="left:176px;top:653px;width:1px;height:20px;background:#2c2c2c;"></div>
<span style="left:180px;top:655px;color:#c4c4c4;font-size:12px;line-height:16px;letter-spacing:0.25px;">Free Aspect</span>
<svg style="left:324px;top:661px;" width="8" height="4" viewBox="0 0 8 4"><path d="M0 0H8L4.0 4Z" fill="#c4c4c4"/></svg>
<div style="left:336px;top:653px;width:1px;height:20px;background:#2c2c2c;"></div>
<span style="left:343px;top:655px;color:#c4c4c4;font-size:12px;line-height:16px;letter-spacing:0.25px;">Scale</span>
<div style="left:388px;top:663px;width:142px;height:1px;background:#6a6a6a;"></div>
<div style="left:381px;top:658px;width:10px;height:10px;background:#999999;border-radius:5px;"></div>
<span style="left:536px;top:655px;color:#c4c4c4;font-size:12px;line-height:16px;">1x</span>
<div style="left:577px;top:653px;width:1px;height:20px;background:#2c2c2c;"></div>
<span style="left:581px;top:655px;color:#c4c4c4;font-size:12px;line-height:16px;letter-spacing:0.3px;">Play Focused</span>
<svg style="left:675px;top:661px;" width="8" height="4" viewBox="0 0 8 4"><path d="M0 0H8L4.0 4Z" fill="#c4c4c4"/></svg>
<div style="left:687px;top:653px;width:1px;height:20px;background:#2c2c2c;"></div>
<svg style="left:693px;top:656px;" width="14" height="14" viewBox="0 0 14 14"><ellipse cx="7" cy="8" rx="3.6" ry="4.6" fill="#c4c4c4"/><circle cx="7" cy="3" r="2" fill="#c4c4c4"/><path d="M1 4.5L3.5 6.5M13 4.5L10.5 6.5M0.5 8.5H3.5M13.5 8.5H10.5M1 12.5L3.8 10.5M13 12.5L10.2 10.5M4.5 0.5L6 2M9.5 0.5L8 2" stroke="#c4c4c4" stroke-width="1"/><rect x="5" y="6.5" width="4" height="3" fill="#3c3c3c"/></svg>
<div style="left:714px;top:653px;width:1px;height:20px;background:#2c2c2c;"></div>
<svg style="left:720px;top:657px;" width="13" height="12" viewBox="0 0 13 12"><path d="M0.5 3.5H2.5L6 0.8V11.2L2.5 8.5H0.5Z" fill="#c4c4c4"/><path d="M8 3.5C9 4.8 9 7.2 8 8.5M10 1.8C12 4 12 8 10 10.2" stroke="#c4c4c4" stroke-width="1.1" fill="none"/></svg>
<div style="left:739px;top:653px;width:1px;height:20px;background:#2c2c2c;"></div>
<svg style="left:745px;top:658px;" width="14" height="10" viewBox="0 0 14 10"><rect x="0" y="0" width="14" height="10" rx="1" fill="#c4c4c4"/><path d="M0 3.5H14M0 6.5H14M3.5 0V6.5M7 0V6.5M10.5 0V6.5" stroke="#3c3c3c" stroke-width="0.9"/><path d="M3 8.3H11" stroke="#3c3c3c" stroke-width="0.9"/></svg>
<div style="left:765px;top:653px;width:1px;height:20px;background:#2c2c2c;"></div>
<span style="left:771px;top:655px;color:#c4c4c4;font-size:12px;line-height:16px;letter-spacing:0.3px;">Stats</span>
<div style="left:805px;top:653px;width:1px;height:20px;background:#2c2c2c;"></div>
<span style="left:809px;top:655px;color:#c4c4c4;font-size:12px;line-height:16px;letter-spacing:0.3px;">Gizmos</span>
<div style="left:857px;top:653px;width:1px;height:20px;background:#2c2c2c;"></div>
<svg style="left:862px;top:661px;" width="8" height="4" viewBox="0 0 8 4"><path d="M0 0H8L4.0 4Z" fill="#c4c4c4"/></svg>
<div style="left:0px;top:674px;width:875px;height:344px;background:radial-gradient(ellipse 260px 110px at 300px 330px,rgba(255,255,255,.16),rgba(255,255,255,0)),radial-gradient(ellipse 220px 160px at 40px 40px,rgba(255,255,255,.14),rgba(255,255,255,0)),linear-gradient(100deg,#c4f8fe 0%,#baf5fd 30%,#b6f4fd 70%,#a4eefb 100%);"></div>
<svg style="left:168px;top:789px;" width="150" height="161" viewBox="0 0 150 161" shape-rendering="crispEdges"><rect x="10" y="0" width="129" height="10" fill="#161616"/><rect x="0" y="10" width="20" height="10" fill="#161616"/><rect x="20" y="10" width="59" height="10" fill="#42b5f6"/><rect x="79" y="10" width="50" height="10" fill="#38a6e7"/><rect x="129" y="10" width="20" height="10" fill="#161616"/><rect x="0" y="20" width="10" height="10" fill="#161616"/><rect x="10" y="20" width="59" height="10" fill="#42b5f6"/><rect x="69" y="20" width="50" height="10" fill="#38a6e7"/><rect x="119" y="20" width="20" height="10" fill="#2e97d8"/><rect x="139" y="20" width="10" height="10" fill="#161616"/><rect x="0" y="30" width="10" height="10" fill="#161616"/><rect x="10" y="30" width="30" height="10" fill="#42b5f6"/><rect x="40" y="30" width="10" height="10" fill="#1b4e6e"/><rect x="50" y="30" width="19" height="10" fill="#42b5f6"/><rect x="69" y="30" width="30" height="10" fill="#38a6e7"/><rect x="99" y="30" width="10" height="10" fill="#1b4e6e"/><rect x="109" y="30" width="10" height="10" fill="#38a6e7"/><rect x="119" y="30" width="20" height="10" fill="#2e97d8"/><rect x="139" y="30" width="10" height="10" fill="#161616"/><rect x="0" y="40" width="10" height="10" fill="#161616"/><rect x="10" y="40" width="20" height="10" fill="#42b5f6"/><rect x="30" y="40" width="10" height="10" fill="#1b4e6e"/><rect x="40" y="40" width="10" height="10" fill="#42b5f6"/><rect x="50" y="40" width="10" height="10" fill="#1b4e6e"/><rect x="60" y="40" width="29" height="10" fill="#38a6e7"/><rect x="89" y="40" width="10" height="10" fill="#1b4e6e"/><rect x="99" y="40" width="10" height="10" fill="#38a6e7"/><rect x="109" y="40" width="10" height="10" fill="#1b4e6e"/><rect x="119" y="40" width="20" height="10" fill="#2e97d8"/><rect x="139" y="40" width="10" height="10" fill="#161616"/><rect x="0" y="50" width="10" height="10" fill="#161616"/><rect x="10" y="50" width="40" height="10" fill="#42b5f6"/><rect x="50" y="50" width="49" height="10" fill="#38a6e7"/><rect x="99" y="50" width="40" height="10" fill="#2e97d8"/><rect x="139" y="50" width="10" height="10" fill="#161616"/><rect x="0" y="60" width="10" height="10" fill="#161616"/><rect x="10" y="60" width="30" height="10" fill="#42b5f6"/><rect x="40" y="60" width="49" height="10" fill="#38a6e7"/><rect x="89" y="60" width="50" height="10" fill="#2e97d8"/><rect x="139" y="60" width="10" height="10" fill="#161616"/><rect x="0" y="70" width="10" height="10" fill="#161616"/><rect x="10" y="70" width="20" height="10" fill="#42b5f6"/><rect x="30" y="70" width="20" height="10" fill="#38a6e7"/><rect x="50" y="70" width="10" height="10" fill="#1b4e6e"/><rect x="60" y="70" width="9" height="10" fill="#d9d9d9"/><rect x="69" y="70" width="10" height="10" fill="#e7e7e7"/><rect x="79" y="70" width="10" height="10" fill="#d9d9d9"/><rect x="89" y="70" width="10" height="10" fill="#1b4e6e"/><rect x="99" y="70" width="30" height="10" fill="#2e97d8"/><rect x="129" y="70" width="10" height="10" fill="#2684be"/><rect x="139" y="70" width="10" height="10" fill="#161616"/><rect x="0" y="80" width="10" height="10" fill="#161616"/><rect x="10" y="80" width="20" height="10" fill="#42b5f6"/><rect x="30" y="80" width="30" height="10" fill="#38a6e7"/><rect x="60" y="80" width="29" height="10" fill="#1b4e6e"/><rect x="89" y="80" width="40" height="10" fill="#2e97d8"/><rect x="129" y="80" width="10" height="10" fill="#2684be"/><rect x="139" y="80" width="10" height="10" fill="#161616"/><rect x="0" y="90" width="10" height="10" fill="#161616"/><rect x="10" y="90" width="20" height="10" fill="#42b5f6"/><rect x="30" y="90" width="20" height="10" fill="#38a6e7"/><rect x="50" y="90" width="69" height="10" fill="#2e97d8"/><rect x="119" y="90" width="20" height="10" fill="#2684be"/><rect x="139" y="90" width="10" height="10" fill="#161616"/><rect x="0" y="100" width="10" height="10" fill="#161616"/><rect x="10" y="100" width="20" height="10" fill="#42b5f6"/><rect x="30" y="100" width="20" height="10" fill="#38a6e7"/><rect x="50" y="100" width="69" height="10" fill="#2e97d8"/><rect x="119" y="100" width="20" height="10" fill="#2684be"/><rect x="139" y="100" width="10" height="10" fill="#161616"/><rect x="0" y="110" width="10" height="10" fill="#161616"/><rect x="10" y="110" width="20" height="10" fill="#42b5f6"/><rect x="30" y="110" width="10" height="10" fill="#38a6e7"/><rect x="40" y="110" width="69" height="10" fill="#2e97d8"/><rect x="109" y="110" width="30" height="10" fill="#2684be"/><rect x="139" y="110" width="10" height="10" fill="#161616"/><rect x="0" y="120" width="10" height="10" fill="#161616"/><rect x="10" y="120" width="20" height="10" fill="#42b5f6"/><rect x="30" y="120" width="10" height="10" fill="#38a6e7"/><rect x="40" y="120" width="10" height="10" fill="#2e97d8"/><rect x="50" y="120" width="49" height="10" fill="#161616"/><rect x="99" y="120" width="10" height="10" fill="#2e97d8"/><rect x="109" y="120" width="30" height="10" fill="#2684be"/><rect x="139" y="120" width="10" height="10" fill="#161616"/><rect x="0" y="130" width="10" height="10" fill="#161616"/><rect x="10" y="130" width="10" height="10" fill="#42b5f6"/><rect x="20" y="130" width="20" height="10" fill="#38a6e7"/><rect x="40" y="130" width="20" height="10" fill="#2e97d8"/><rect x="60" y="130" width="9" height="10" fill="#161616"/><rect x="79" y="130" width="10" height="10" fill="#161616"/><rect x="89" y="130" width="50" height="10" fill="#2684be"/><rect x="139" y="130" width="10" height="10" fill="#161616"/><rect x="0" y="140" width="10" height="10" fill="#161616"/><rect x="10" y="140" width="10" height="10" fill="#3ea6e4"/><rect x="20" y="140" width="40" height="10" fill="#3990c6"/><rect x="60" y="140" width="9" height="10" fill="#161616"/><rect x="79" y="140" width="10" height="10" fill="#161616"/><rect x="89" y="140" width="50" height="10" fill="#2684be"/><rect x="139" y="140" width="10" height="10" fill="#161616"/><rect x="10" y="150" width="50" height="10" fill="#161616"/><rect x="89" y="150" width="50" height="10" fill="#161616"/></svg>
<svg style="left:566px;top:789px;" width="150" height="161" viewBox="0 0 150 161" shape-rendering="crispEdges"><rect x="10" y="0" width="129" height="10" fill="#161616"/><rect x="0" y="10" width="20" height="10" fill="#161616"/><rect x="20" y="10" width="59" height="10" fill="#f540c5"/><rect x="79" y="10" width="50" height="10" fill="#e536b5"/><rect x="129" y="10" width="20" height="10" fill="#161616"/><rect x="0" y="20" width="10" height="10" fill="#161616"/><rect x="10" y="20" width="59" height="10" fill="#f540c5"/><rect x="69" y="20" width="50" height="10" fill="#e536b5"/><rect x="119" y="20" width="20" height="10" fill="#d82ba8"/><rect x="139" y="20" width="10" height="10" fill="#161616"/><rect x="0" y="30" width="10" height="10" fill="#161616"/><rect x="10" y="30" width="30" height="10" fill="#f540c5"/><rect x="40" y="30" width="10" height="10" fill="#6e1a56"/><rect x="50" y="30" width="19" height="10" fill="#f540c5"/><rect x="69" y="30" width="30" height="10" fill="#e536b5"/><rect x="99" y="30" width="10" height="10" fill="#6e1a56"/><rect x="109" y="30" width="10" height="10" fill="#e536b5"/><rect x="119" y="30" width="20" height="10" fill="#d82ba8"/><rect x="139" y="30" width="10" height="10" fill="#161616"/><rect x="0" y="40" width="10" height="10" fill="#161616"/><rect x="10" y="40" width="20" height="10" fill="#f540c5"/><rect x="30" y="40" width="10" height="10" fill="#6e1a56"/><rect x="40" y="40" width="10" height="10" fill="#f540c5"/><rect x="50" y="40" width="9" height="10" fill="#6e1a56"/><rect x="59" y="40" width="30" height="10" fill="#e536b5"/><rect x="89" y="40" width="10" height="10" fill="#6e1a56"/><rect x="99" y="40" width="10" height="10" fill="#e536b5"/><rect x="109" y="40" width="10" height="10" fill="#6e1a56"/><rect x="119" y="40" width="20" height="10" fill="#d82ba8"/><rect x="139" y="40" width="10" height="10" fill="#161616"/><rect x="0" y="50" width="10" height="10" fill="#161616"/><rect x="10" y="50" width="40" height="10" fill="#f540c5"/><rect x="50" y="50" width="49" height="10" fill="#e536b5"/><rect x="99" y="50" width="40" height="10" fill="#d82ba8"/><rect x="139" y="50" width="10" height="10" fill="#161616"/><rect x="0" y="60" width="10" height="10" fill="#161616"/><rect x="10" y="60" width="30" height="10" fill="#f540c5"/><rect x="40" y="60" width="49" height="10" fill="#e536b5"/><rect x="89" y="60" width="50" height="10" fill="#d82ba8"/><rect x="139" y="60" width="10" height="10" fill="#161616"/><rect x="0" y="70" width="10" height="10" fill="#161616"/><rect x="10" y="70" width="20" height="10" fill="#f540c5"/><rect x="30" y="70" width="20" height="10" fill="#e536b5"/><rect x="50" y="70" width="9" height="10" fill="#6e1a56"/><rect x="59" y="70" width="10" height="10" fill="#d9d9d9"/><rect x="69" y="70" width="10" height="10" fill="#e7e7e7"/><rect x="79" y="70" width="10" height="10" fill="#d9d9d9"/><rect x="89" y="70" width="10" height="10" fill="#6e1a56"/><rect x="99" y="70" width="30" height="10" fill="#d82ba8"/><rect x="129" y="70" width="10" height="10" fill="#bc2291"/><rect x="139" y="70" width="10" height="10" fill="#161616"/><rect x="0" y="80" width="10" height="10" fill="#161616"/><rect x="10" y="80" width="20" height="10" fill="#f540c5"/><rect x="30" y="80" width="29" height="10" fill="#e536b5"/><rect x="59" y="80" width="30" height="10" fill="#6e1a56"/><rect x="89" y="80" width="40" height="10" fill="#d82ba8"/><rect x="129" y="80" width="10" height="10" fill="#bc2291"/><rect x="139" y="80" width="10" height="10" fill="#161616"/><rect x="0" y="90" width="10" height="10" fill="#161616"/><rect x="10" y="90" width="20" height="10" fill="#f540c5"/><rect x="30" y="90" width="20" height="10" fill="#e536b5"/><rect x="50" y="90" width="69" height="10" fill="#d82ba8"/><rect x="119" y="90" width="20" height="10" fill="#bc2291"/><rect x="139" y="90" width="10" height="10" fill="#161616"/><rect x="0" y="100" width="10" height="10" fill="#161616"/><rect x="10" y="100" width="20" height="10" fill="#f540c5"/><rect x="30" y="100" width="20" height="10" fill="#e536b5"/><rect x="50" y="100" width="69" height="10" fill="#d82ba8"/><rect x="119" y="100" width="20" height="10" fill="#bc2291"/><rect x="139" y="100" width="10" height="10" fill="#161616"/><rect x="0" y="110" width="10" height="10" fill="#161616"/><rect x="10" y="110" width="20" height="10" fill="#f540c5"/><rect x="30" y="110" width="10" height="10" fill="#e536b5"/><rect x="40" y="110" width="69" height="10" fill="#d82ba8"/><rect x="109" y="110" width="30" height="10" fill="#bc2291"/><rect x="139" y="110" width="10" height="10" fill="#161616"/><rect x="0" y="120" width="10" height="10" fill="#161616"/><rect x="10" y="120" width="20" height="10" fill="#f540c5"/><rect x="30" y="120" width="10" height="10" fill="#e536b5"/><rect x="40" y="120" width="10" height="10" fill="#d82ba8"/><rect x="50" y="120" width="49" height="10" fill="#161616"/><rect x="99" y="120" width="10" height="10" fill="#d82ba8"/><rect x="109" y="120" width="30" height="10" fill="#bc2291"/><rect x="139" y="120" width="10" height="10" fill="#161616"/><rect x="0" y="130" width="10" height="10" fill="#161616"/><rect x="10" y="130" width="10" height="10" fill="#f540c5"/><rect x="20" y="130" width="20" height="10" fill="#e536b5"/><rect x="40" y="130" width="19" height="10" fill="#d82ba8"/><rect x="59" y="130" width="10" height="10" fill="#161616"/><rect x="79" y="130" width="10" height="10" fill="#161616"/><rect x="89" y="130" width="50" height="10" fill="#bc2291"/><rect x="139" y="130" width="10" height="10" fill="#161616"/><rect x="0" y="140" width="10" height="10" fill="#161616"/><rect x="10" y="140" width="10" height="10" fill="#e23cb6"/><rect x="20" y="140" width="39" height="10" fill="#b9339b"/><rect x="59" y="140" width="10" height="10" fill="#161616"/><rect x="79" y="140" width="10" height="10" fill="#161616"/><rect x="89" y="140" width="50" height="10" fill="#bc2291"/><rect x="139" y="140" width="10" height="10" fill="#161616"/><rect x="10" y="150" width="49" height="10" fill="#161616"/><rect x="89" y="150" width="50" height="10" fill="#161616"/></svg>
<span style="left:168px;top:878px;color:#fff;font-size:24px;line-height:28px;width:149px;text-align:center;">Clica</span>
<span style="left:566px;top:878px;color:#fff;font-size:24px;line-height:28px;width:149px;text-align:center;">Clica</span>
<svg style="left:175px;top:905px;" width="63" height="93" viewBox="0 0 63 93"><path d="M10 83.3L44.1 24.7" stroke="#fff" stroke-width="2"/><path d="M52.6 10.0L47.4 28.9L38.7 23.9Z" fill="#fff"/></svg>
<svg style="left:623px;top:899px;" width="34" height="82" viewBox="0 0 34 82"><path d="M23.6 71.8L13.7 26.6" stroke="#fff" stroke-width="2"/><path d="M10.0 10.0L19.0 27.5L9.2 29.6Z" fill="#fff"/></svg>

<!-- p5_project -->

<div style="left:877px;top:634px;width:611px;height:19px;background:#282828;"></div>
<div style="left:877px;top:634px;width:81px;height:19px;background:#3c3c3c;border-radius:3px 3px 0 0;"></div>
<svg style="left:885px;top:638px;" width="14" height="12" viewBox="0 0 14 12"><path d="M0 1.2Q0 0.3 0.9 0.3H5.2L6.6 2H12.6Q13.5 2 13.5 2.9V10.8Q13.5 11.7 12.6 11.7H0.9Q0 11.7 0 10.8Z" fill="#c2c2c2"/></svg>
<span style="left:901px;top:636px;color:#d2d2d2;font-size:12px;line-height:16px;letter-spacing:0.25px;">Project</span>
<svg style="left:1453px;top:638px;" width="10" height="11" viewBox="0 0 10 11"><rect x="1" y="6.5" width="7.600" height="3.500" fill="none" stroke="#c4c4c4" stroke-width="1.1"/><path d="M2.4 6.500V3.400A2.300 2.300 0 0 1 7 3.400V3.900" stroke="#c4c4c4" stroke-width="1.1" fill="none"/></svg>
<svg style="left:1473px;top:638px;" width="4" height="12" viewBox="0 0 4 12"><circle cx="2" cy="1.6" r="1.25" fill="#c4c4c4"/><circle cx="2" cy="5.4" r="1.25" fill="#c4c4c4"/><circle cx="2" cy="9.2" r="1.25" fill="#c4c4c4"/></svg>
<div style="left:877px;top:653px;width:611px;height:20px;background:#3c3c3c;"></div>
<svg style="left:884px;top:656px;" width="13" height="13" viewBox="0 0 13 13"><path d="M6.5 0.5V12.5M0.5 6.5H12.5" stroke="#c4c4c4" stroke-width="1.6"/></svg>
<svg style="left:900px;top:661px;" width="7" height="4" viewBox="0 0 7 4"><path d="M0 0H7L3.5 4Z" fill="#c4c4c4"/></svg>
<div style="left:1025px;top:655px;width:319px;height:16px;background:#2a2a2a;border-radius:3px;border:1px solid #1f1f1f;"></div>
<svg style="left:1030px;top:659px;" width="8" height="8" viewBox="0 0 9 9"><circle cx="3.5" cy="3.5" r="2.6" stroke="#b0b0b0" stroke-width="1.2" fill="none"/><path d="M5.4 5.4L8.3 8.3" stroke="#b0b0b0" stroke-width="1.3"/></svg>
<svg style="left:1328px;top:658px;" width="13" height="12" viewBox="0 0 13 12"><rect x="0.550" y="6.550" width="4.400" height="4.400" fill="none" stroke="#c4c4c4" stroke-width="1.1"/><path d="M2.550 6.500V0.550H12.450V9.450H5" fill="none" stroke="#c4c4c4" stroke-width="1.1"/><path d="M5.500 7L10 2.500M6.800 2.500H10V5.700" stroke="#c4c4c4" stroke-width="1.1" fill="none"/></svg>
<div style="left:1345px;top:653px;width:1px;height:20px;background:#2c2c2c;"></div>
<div style="left:1371px;top:653px;width:1px;height:20px;background:#2c2c2c;"></div>
<div style="left:1397px;top:653px;width:1px;height:20px;background:#2c2c2c;"></div>
<div style="left:1423px;top:653px;width:1px;height:20px;background:#2c2c2c;"></div>
<div style="left:1449px;top:653px;width:1px;height:20px;background:#2c2c2c;"></div>
<svg style="left:1352px;top:656px;" width="13" height="13" viewBox="0 0 13 13"><circle cx="3.4" cy="3.2" r="2.6" fill="#c4c4c4"/><path d="M7 0.5H10.5L12.5 5.5H7Z" fill="#c4c4c4"/><circle cx="4.2" cy="9.2" r="3.4" fill="#c4c4c4"/><path d="M8.5 6.5L12.8 12.5H7Z" fill="#c4c4c4"/></svg>
<svg style="left:1377px;top:657px;" width="13" height="12" viewBox="0 0 13 12"><path d="M0.5 6.5L6 1H12.3V7L6.8 11.5Z" fill="#c4c4c4"/><circle cx="9.8" cy="3.5" r="1.1" fill="#3c3c3c"/></svg>
<svg style="left:1403px;top:656px;" width="14" height="14" viewBox="0 0 14 14"><circle cx="7" cy="7" r="6.5" fill="#c4c4c4"/><path d="M7 3V8" stroke="#3c3c3c" stroke-width="1.8"/><circle cx="7" cy="10.3" r="1" fill="#3c3c3c"/></svg>
<svg style="left:1429px;top:656px;" width="14" height="13" viewBox="0 0 14 13"><path d="M7 0.5L8.9 4.6L13.4 5.1L10 8.1L11 12.5L7 10.2L3 12.5L4 8.1L0.6 5.1L5.1 4.6Z" fill="#8a8a8a"/></svg>
<svg style="left:1455px;top:657px;" width="16" height="12" viewBox="0 0 16 12"><path d="M1 6C3.5 1.8 12.5 1.8 15 6C12.5 10.2 3.5 10.2 1 6Z" fill="none" stroke="#c4c4c4" stroke-width="1.2"/><circle cx="8.6" cy="6" r="1.8" fill="none" stroke="#c4c4c4" stroke-width="1.1"/><path d="M2 11.5L14 0.5" stroke="#c4c4c4" stroke-width="1.3"/></svg>
<span style="left:1471px;top:655px;color:#c4c4c4;font-size:12px;line-height:16px;">21</span>
<div style="left:877px;top:673px;width:611px;height:1px;background:#232323;"></div>
<div style="left:877px;top:673px;width:209px;height:345px;background:#383838;overflow:hidden;"></div>
<svg style="left:881px;top:678px;" width="9" height="8" viewBox="0 0 9 8"><path d="M0 0.5H9L4.5 7.5Z" fill="#8c8c8c"/></svg>
<svg style="left:895px;top:675px;" width="12" height="12" viewBox="0 0 12 12"><path d="M6 0.3L7.7 4.1L11.8 4.6L8.7 7.4L9.6 11.5L6 9.4L2.4 11.5L3.3 7.4L0.2 4.6L4.3 4.1Z" fill="#d0d0d0"/></svg>
<span style="left:911px;top:673.5px;color:#d2d2d2;font-size:12.5px;line-height:16px;font-weight:bold;letter-spacing:0.6px;">Favorites</span>
<svg style="left:908px;top:691px;" width="13" height="13" viewBox="0 0 13 13"><circle cx="5" cy="5" r="4" stroke="#c4c4c4" stroke-width="1.1" fill="none"/><path d="M8 8L12 12" stroke="#c4c4c4" stroke-width="1.3"/></svg>
<span style="left:925px;top:689.5px;color:#c4c4c4;font-size:12.5px;line-height:16px;letter-spacing:0.15px;">All Materials</span>
<svg style="left:908px;top:707px;" width="13" height="13" viewBox="0 0 13 13"><circle cx="5" cy="5" r="4" stroke="#c4c4c4" stroke-width="1.1" fill="none"/><path d="M8 8L12 12" stroke="#c4c4c4" stroke-width="1.3"/></svg>
<span style="left:925px;top:705.5px;color:#c4c4c4;font-size:12.5px;line-height:16px;letter-spacing:0.15px;">All Models</span>
<svg style="left:908px;top:723px;" width="13" height="13" viewBox="0 0 13 13"><circle cx="5" cy="5" r="4" stroke="#c4c4c4" stroke-width="1.1" fill="none"/><path d="M8 8L12 12" stroke="#c4c4c4" stroke-width="1.3"/></svg>
<span style="left:925px;top:721.5px;color:#c4c4c4;font-size:12.5px;line-height:16px;letter-spacing:0.15px;">All Prefabs</span>
<svg style="left:881px;top:757.5px;" width="9" height="8" viewBox="0 0 9 8"><path d="M0 0.5H9L4.5 7.5Z" fill="#8c8c8c"/></svg>
<svg style="left:895px;top:754.5px;" width="15" height="12" viewBox="0 0 15 12"><path d="M0.5 11V1.2Q0.5 0.5 1.2 0.5H5L6.3 2H11.3Q12 2 12 2.7V4.2" fill="none" stroke="#c2c2c2" stroke-width="1.2"/><path d="M0.8 11.5L3.2 4.5H14.6L12.2 11.5Z" fill="#c2c2c2"/></svg>
<span style="left:911px;top:753.0px;color:#d2d2d2;font-size:12.5px;line-height:16px;font-weight:bold;letter-spacing:0.6px;">Assets</span>
<svg style="left:895px;top:773.5px;" width="9" height="8" viewBox="0 0 9 8"><path d="M0 0.5H9L4.5 7.5Z" fill="#8c8c8c"/></svg>
<svg style="left:909px;top:770.5px;" width="15" height="12" viewBox="0 0 15 12"><path d="M0.5 11V1.2Q0.5 0.5 1.2 0.5H5L6.3 2H11.3Q12 2 12 2.7V4.2" fill="none" stroke="#c2c2c2" stroke-width="1.2"/><path d="M0.8 11.5L3.2 4.5H14.6L12.2 11.5Z" fill="#c2c2c2"/></svg>
<span style="left:925px;top:769.0px;color:#c4c4c4;font-size:12.5px;line-height:16px;letter-spacing:0.15px;">Brackeys</span>
<svg style="left:909px;top:789.5px;" width="9" height="8" viewBox="0 0 9 8"><path d="M0 0.5H9L4.5 7.5Z" fill="#8c8c8c"/></svg>
<svg style="left:923px;top:786.5px;" width="15" height="12" viewBox="0 0 15 12"><path d="M0.5 11V1.2Q0.5 0.5 1.2 0.5H5L6.3 2H11.3Q12 2 12 2.7V4.2" fill="none" stroke="#c2c2c2" stroke-width="1.2"/><path d="M0.8 11.5L3.2 4.5H14.6L12.2 11.5Z" fill="#c2c2c2"/></svg>
<span style="left:939px;top:785.0px;color:#c4c4c4;font-size:12.5px;line-height:16px;letter-spacing:0.15px;">2D Mega Pack</span>
<svg style="left:937px;top:802.5px;" width="14" height="12" viewBox="0 0 14 12"><path d="M0 1.2Q0 0.3 0.9 0.3H5.2L6.6 2H12.6Q13.5 2 13.5 2.9V10.8Q13.5 11.7 12.6 11.7H0.9Q0 11.7 0 10.8Z" fill="#c2c2c2"/></svg>
<span style="left:953px;top:801.0px;color:#c4c4c4;font-size:12.5px;line-height:16px;letter-spacing:0.15px;">-- Example Photos --</span>
<svg style="left:937px;top:818.5px;" width="14" height="12" viewBox="0 0 14 12"><path d="M0 1.2Q0 0.3 0.9 0.3H5.2L6.6 2H12.6Q13.5 2 13.5 2.9V10.8Q13.5 11.7 12.6 11.7H0.9Q0 11.7 0 10.8Z" fill="#c2c2c2"/></svg>
<span style="left:953px;top:817.0px;color:#c4c4c4;font-size:12.5px;line-height:16px;letter-spacing:0.15px;">Backgrounds</span>
<svg style="left:923px;top:837.5px;" width="9" height="8" viewBox="0 0 9 8"><path d="M0 0.5H9L4.5 7.5Z" fill="#8c8c8c"/></svg>
<svg style="left:937px;top:834.5px;" width="15" height="12" viewBox="0 0 15 12"><path d="M0.5 11V1.2Q0.5 0.5 1.2 0.5H5L6.3 2H11.3Q12 2 12 2.7V4.2" fill="none" stroke="#c2c2c2" stroke-width="1.2"/><path d="M0.8 11.5L3.2 4.5H14.6L12.2 11.5Z" fill="#c2c2c2"/></svg>
<span style="left:953px;top:833.0px;color:#c4c4c4;font-size:12.5px;line-height:16px;letter-spacing:0.15px;">Characters</span>
<svg style="left:937px;top:853.5px;" width="9" height="8" viewBox="0 0 9 8"><path d="M0 0.5H9L4.5 7.5Z" fill="#8c8c8c"/></svg>
<svg style="left:951px;top:850.5px;" width="15" height="12" viewBox="0 0 15 12"><path d="M0.5 11V1.2Q0.5 0.5 1.2 0.5H5L6.3 2H11.3Q12 2 12 2.7V4.2" fill="none" stroke="#c2c2c2" stroke-width="1.2"/><path d="M0.8 11.5L3.2 4.5H14.6L12.2 11.5Z" fill="#c2c2c2"/></svg>
<span style="left:967px;top:849.0px;color:#c4c4c4;font-size:12.5px;line-height:16px;letter-spacing:0.15px;">Animation</span>
<svg style="left:965px;top:866.5px;" width="14" height="12" viewBox="0 0 14 12"><path d="M0 1.2Q0 0.3 0.9 0.3H5.2L6.6 2H12.6Q13.5 2 13.5 2.9V10.8Q13.5 11.7 12.6 11.7H0.9Q0 11.7 0 10.8Z" fill="#c2c2c2"/></svg>
<span style="left:981px;top:865.0px;color:#c4c4c4;font-size:12.5px;line-height:16px;letter-spacing:0.15px;">Astronaut</span>
<svg style="left:965px;top:882.5px;" width="14" height="12" viewBox="0 0 14 12"><path d="M0 1.2Q0 0.3 0.9 0.3H5.2L6.6 2H12.6Q13.5 2 13.5 2.9V10.8Q13.5 11.7 12.6 11.7H0.9Q0 11.7 0 10.8Z" fill="#c2c2c2"/></svg>
<span style="left:981px;top:881.0px;color:#c4c4c4;font-size:12.5px;line-height:16px;letter-spacing:0.15px;">Detective</span>
<div style="left:877px;top:896.5px;width:196px;height:16px;background:#4d4d4d;"></div>
<svg style="left:937px;top:901.5px;" width="9" height="8" viewBox="0 0 9 8"><path d="M0 0.5H9L4.5 7.5Z" fill="#8c8c8c"/></svg>
<svg style="left:951px;top:898.5px;" width="15" height="12" viewBox="0 0 15 12"><path d="M0.5 11V1.2Q0.5 0.5 1.2 0.5H5L6.3 2H11.3Q12 2 12 2.7V4.2" fill="none" stroke="#c2c2c2" stroke-width="1.2"/><path d="M0.8 11.5L3.2 4.5H14.6L12.2 11.5Z" fill="#c2c2c2"/></svg>
<span style="left:967px;top:897.0px;color:#c4c4c4;font-size:12.5px;line-height:16px;letter-spacing:0.15px;">Blob Players</span>
<svg style="left:965px;top:914.5px;" width="14" height="12" viewBox="0 0 14 12"><path d="M0 1.2Q0 0.3 0.9 0.3H5.2L6.6 2H12.6Q13.5 2 13.5 2.9V10.8Q13.5 11.7 12.6 11.7H0.9Q0 11.7 0 10.8Z" fill="#c2c2c2"/></svg>
<span style="left:981px;top:913.0px;color:#c4c4c4;font-size:12.5px;line-height:16px;letter-spacing:0.15px;">Animation</span>
<svg style="left:951px;top:930.5px;" width="14" height="12" viewBox="0 0 14 12"><path d="M0 1.2Q0 0.3 0.9 0.3H5.2L6.6 2H12.6Q13.5 2 13.5 2.9V10.8Q13.5 11.7 12.6 11.7H0.9Q0 11.7 0 10.8Z" fill="#c2c2c2"/></svg>
<span style="left:967px;top:929.0px;color:#c4c4c4;font-size:12.5px;line-height:16px;letter-spacing:0.15px;">Fantasy</span>
<svg style="left:939px;top:947.5px;" width="6" height="10" viewBox="0 0 6 10"><path d="M0.5 0V9L6 4.5Z" fill="#8c8c8c"/></svg>
<svg style="left:951px;top:946.5px;" width="14" height="12" viewBox="0 0 14 12"><path d="M0 1.2Q0 0.3 0.9 0.3H5.2L6.6 2H12.6Q13.5 2 13.5 2.9V10.8Q13.5 11.7 12.6 11.7H0.9Q0 11.7 0 10.8Z" fill="#c2c2c2"/></svg>
<span style="left:967px;top:945.0px;color:#c4c4c4;font-size:12.5px;line-height:16px;letter-spacing:0.15px;">Soldiers</span>
<svg style="left:951px;top:962.5px;" width="14" height="12" viewBox="0 0 14 12"><path d="M0 1.2Q0 0.3 0.9 0.3H5.2L6.6 2H12.6Q13.5 2 13.5 2.9V10.8Q13.5 11.7 12.6 11.7H0.9Q0 11.7 0 10.8Z" fill="#c2c2c2"/></svg>
<span style="left:967px;top:961.0px;color:#c4c4c4;font-size:12.5px;line-height:16px;letter-spacing:0.15px;">Stickman</span>
<svg style="left:925px;top:979.5px;" width="6" height="10" viewBox="0 0 6 10"><path d="M0.5 0V9L6 4.5Z" fill="#8c8c8c"/></svg>
<svg style="left:937px;top:978.5px;" width="14" height="12" viewBox="0 0 14 12"><path d="M0 1.2Q0 0.3 0.9 0.3H5.2L6.6 2H12.6Q13.5 2 13.5 2.9V10.8Q13.5 11.7 12.6 11.7H0.9Q0 11.7 0 10.8Z" fill="#c2c2c2"/></svg>
<span style="left:953px;top:977.0px;color:#c4c4c4;font-size:12.5px;line-height:16px;letter-spacing:0.15px;">Effects</span>
<svg style="left:925px;top:995.5px;" width="6" height="10" viewBox="0 0 6 10"><path d="M0.5 0V9L6 4.5Z" fill="#8c8c8c"/></svg>
<svg style="left:937px;top:994.5px;" width="14" height="12" viewBox="0 0 14 12"><path d="M0 1.2Q0 0.3 0.9 0.3H5.2L6.6 2H12.6Q13.5 2 13.5 2.9V10.8Q13.5 11.7 12.6 11.7H0.9Q0 11.7 0 10.8Z" fill="#c2c2c2"/></svg>
<span style="left:953px;top:993.0px;color:#c4c4c4;font-size:12.5px;line-height:16px;letter-spacing:0.15px;">Enemies</span>
<div class="clip" style="left:877px;top:1008.5px;width:196px;height:9.5px">
<svg style="left:48px;top:3px;" width="6" height="10" viewBox="0 0 6 10"><path d="M0.5 0V9L6 4.5Z" fill="#8c8c8c"/></svg>
<svg style="left:60px;top:2px;" width="14" height="12" viewBox="0 0 14 12"><path d="M0 1.2Q0 0.3 0.9 0.3H5.2L6.6 2H12.6Q13.5 2 13.5 2.9V10.8Q13.5 11.7 12.6 11.7H0.9Q0 11.7 0 10.8Z" fill="#c2c2c2"/></svg>
<span style="left:76px;top:0.5px;color:#c4c4c4;font-size:12.5px;line-height:16px;letter-spacing:0.15px;">Environment</span>
</div>
<div style="left:1073px;top:674px;width:11px;height:344px;background:#353535;"></div>
<svg style="left:1075px;top:679px;" width="8" height="5" viewBox="0 0 8 5"><path d="M0 5H8L4 0Z" fill="#c4c4c4"/></svg>
<div style="left:1075px;top:691px;width:9px;height:169px;background:#5f5f5f;border-radius:4.5px;"></div>
<svg style="left:1075px;top:1007px;" width="8" height="5" viewBox="0 0 8 5"><path d="M0 0H8L4 5Z" fill="#c4c4c4"/></svg>
<div style="left:1084px;top:674px;width:3px;height:344px;background:#262626;"></div>
<div style="left:1087px;top:673px;width:401px;height:345px;background:#383838;"></div>
<div style="left:1087px;top:674px;width:401px;height:21px;background:#414141;border-bottom:1px solid #2a2a2a;"></div>
<span style="left:1090px;top:676.5px;color:#c4c4c4;font-size:12px;line-height:16px;letter-spacing:0.3px;">Assets</span>
<span style="left:1147px;top:676.5px;color:#c4c4c4;font-size:12px;line-height:16px;letter-spacing:0.3px;">Brackeys</span>
<span style="left:1217px;top:676.5px;color:#c4c4c4;font-size:12px;line-height:16px;letter-spacing:0.3px;">2D Mega Pack</span>
<span style="left:1318px;top:676.5px;color:#c4c4c4;font-size:12px;line-height:16px;letter-spacing:0.3px;">Characters</span>
<svg style="left:1136px;top:680px;" width="6" height="9" viewBox="0 0 6 9"><path d="M0.8 0.6L5 4.5L0.8 8.4" stroke="#a0a0a0" stroke-width="1.1" fill="none"/></svg>
<svg style="left:1206px;top:680px;" width="6" height="9" viewBox="0 0 6 9"><path d="M0.8 0.6L5 4.5L0.8 8.4" stroke="#a0a0a0" stroke-width="1.1" fill="none"/></svg>
<svg style="left:1307px;top:680px;" width="6" height="9" viewBox="0 0 6 9"><path d="M0.8 0.6L5 4.5L0.8 8.4" stroke="#a0a0a0" stroke-width="1.1" fill="none"/></svg>
<svg style="left:1388px;top:680px;" width="6" height="9" viewBox="0 0 6 9"><path d="M0.8 0.6L5 4.5L0.8 8.4" stroke="#a0a0a0" stroke-width="1.1" fill="none"/></svg>
<span style="left:1399px;top:676.5px;color:#d2d2d2;font-size:12px;line-height:16px;font-weight:bold;letter-spacing:0.65px;">Blob Players</span>
<svg style="left:1103px;top:697px;" width="14" height="12" viewBox="0 0 14 12"><path d="M0 1.2Q0 0.3 0.9 0.3H5.2L6.6 2H12.6Q13.5 2 13.5 2.9V10.8Q13.5 11.7 12.6 11.7H0.9Q0 11.7 0 10.8Z" fill="#c2c2c2"/></svg>
<span style="left:1120px;top:695px;color:#c4c4c4;font-size:13px;line-height:16px;letter-spacing:0.3px;">Animation</span>
<svg style="left:1088px;top:716px;" width="9" height="8" viewBox="0 0 9 8"><path d="M0 0.5H9L4.5 7.5Z" fill="#8c8c8c"/></svg>
<svg style="left:1103px;top:710px;" width="14" height="5" viewBox="0 0 14 5"><g fill="#2ea7ff"><rect x="0" y="0" width="3" height="1"/><rect x="4" y="0" width="1" height="1"/><rect x="6" y="0" width="4" height="1"/><rect x="11" y="0" width="2" height="1"/><rect x="1" y="2" width="2" height="1"/><rect x="0" y="3" width="1" height="1"/></g></svg>
<span style="left:1120px;top:711px;color:#c4c4c4;font-size:13px;line-height:16px;letter-spacing:0px;">BlobPlayer_Blue</span>
<svg style="left:1117px;top:728px;" width="14" height="14" viewBox="0 0 14 14"><rect x="1.5" y="1.5" width="11" height="11" fill="none" stroke="#a78de0" stroke-width="1"/><g fill="#a78de0"><rect x="0" y="0" width="3" height="3"/><rect x="11" y="0" width="3" height="3"/><rect x="0" y="11" width="3" height="3"/><rect x="11" y="11" width="3" height="3"/></g><circle cx="7" cy="7" r="2.8" fill="#e0e0e0"/></svg>
<span style="left:1134px;top:727px;color:#c4c4c4;font-size:13px;line-height:16px;letter-spacing:0px;">BlobPlayer_Blue_0</span>
<svg style="left:1117px;top:744px;" width="14" height="14" viewBox="0 0 14 14"><rect x="1.5" y="1.5" width="11" height="11" fill="none" stroke="#a78de0" stroke-width="1"/><g fill="#a78de0"><rect x="0" y="0" width="3" height="3"/><rect x="11" y="0" width="3" height="3"/><rect x="0" y="11" width="3" height="3"/><rect x="11" y="11" width="3" height="3"/></g><circle cx="7" cy="7" r="2.8" fill="#e0e0e0"/></svg>
<span style="left:1134px;top:743px;color:#c4c4c4;font-size:13px;line-height:16px;letter-spacing:0px;">BlobPlayer_Blue_1</span>
<svg style="left:1117px;top:760px;" width="14" height="14" viewBox="0 0 14 14"><rect x="1.5" y="1.5" width="11" height="11" fill="none" stroke="#a78de0" stroke-width="1"/><g fill="#a78de0"><rect x="0" y="0" width="3" height="3"/><rect x="11" y="0" width="3" height="3"/><rect x="0" y="11" width="3" height="3"/><rect x="11" y="11" width="3" height="3"/></g><circle cx="7" cy="7" r="2.8" fill="#e0e0e0"/></svg>
<span style="left:1134px;top:759px;color:#c4c4c4;font-size:13px;line-height:16px;letter-spacing:0px;">BlobPlayer_Blue_2</span>
<svg style="left:1117px;top:776px;" width="14" height="14" viewBox="0 0 14 14"><rect x="1.5" y="1.5" width="11" height="11" fill="none" stroke="#a78de0" stroke-width="1"/><g fill="#a78de0"><rect x="0" y="0" width="3" height="3"/><rect x="11" y="0" width="3" height="3"/><rect x="0" y="11" width="3" height="3"/><rect x="11" y="11" width="3" height="3"/></g><circle cx="7" cy="7" r="2.8" fill="#e0e0e0"/></svg>
<span style="left:1134px;top:775px;color:#c4c4c4;font-size:13px;line-height:16px;letter-spacing:0px;">BlobPlayer_Blue_3</span>
<svg style="left:1117px;top:792px;" width="14" height="14" viewBox="0 0 14 14"><rect x="1.5" y="1.5" width="11" height="11" fill="none" stroke="#a78de0" stroke-width="1"/><g fill="#a78de0"><rect x="0" y="0" width="3" height="3"/><rect x="11" y="0" width="3" height="3"/><rect x="0" y="11" width="3" height="3"/><rect x="11" y="11" width="3" height="3"/></g><circle cx="7" cy="7" r="2.8" fill="#e0e0e0"/></svg>
<span style="left:1134px;top:791px;color:#c4c4c4;font-size:13px;line-height:16px;letter-spacing:0px;">BlobPlayer_Blue_4</span>
<svg style="left:1117px;top:808px;" width="14" height="14" viewBox="0 0 14 14"><rect x="1.5" y="1.5" width="11" height="11" fill="none" stroke="#a78de0" stroke-width="1"/><g fill="#a78de0"><rect x="0" y="0" width="3" height="3"/><rect x="11" y="0" width="3" height="3"/><rect x="0" y="11" width="3" height="3"/><rect x="11" y="11" width="3" height="3"/></g><circle cx="7" cy="7" r="2.8" fill="#e0e0e0"/></svg>
<span style="left:1134px;top:807px;color:#c4c4c4;font-size:13px;line-height:16px;letter-spacing:0px;">BlobPlayer_Blue_5</span>
<svg style="left:1117px;top:824px;" width="14" height="14" viewBox="0 0 14 14"><rect x="1.5" y="1.5" width="11" height="11" fill="none" stroke="#a78de0" stroke-width="1"/><g fill="#a78de0"><rect x="0" y="0" width="3" height="3"/><rect x="11" y="0" width="3" height="3"/><rect x="0" y="11" width="3" height="3"/><rect x="11" y="11" width="3" height="3"/></g><circle cx="7" cy="7" r="2.8" fill="#e0e0e0"/></svg>
<span style="left:1134px;top:823px;color:#c4c4c4;font-size:13px;line-height:16px;letter-spacing:0px;">BlobPlayer_Blue_6</span>
<svg style="left:1117px;top:840px;" width="14" height="14" viewBox="0 0 14 14"><rect x="1.5" y="1.5" width="11" height="11" fill="none" stroke="#a78de0" stroke-width="1"/><g fill="#a78de0"><rect x="0" y="0" width="3" height="3"/><rect x="11" y="0" width="3" height="3"/><rect x="0" y="11" width="3" height="3"/><rect x="11" y="11" width="3" height="3"/></g><circle cx="7" cy="7" r="2.8" fill="#e0e0e0"/></svg>
<span style="left:1134px;top:839px;color:#c4c4c4;font-size:13px;line-height:16px;letter-spacing:0px;">BlobPlayer_Blue_7</span>
<svg style="left:1117px;top:856px;" width="14" height="14" viewBox="0 0 14 14"><rect x="1.5" y="1.5" width="11" height="11" fill="none" stroke="#a78de0" stroke-width="1"/><g fill="#a78de0"><rect x="0" y="0" width="3" height="3"/><rect x="11" y="0" width="3" height="3"/><rect x="0" y="11" width="3" height="3"/><rect x="11" y="11" width="3" height="3"/></g><circle cx="7" cy="7" r="2.8" fill="#e0e0e0"/></svg>
<span style="left:1134px;top:855px;color:#c4c4c4;font-size:13px;line-height:16px;letter-spacing:0px;">BlobPlayer_Blue_8</span>
<svg style="left:1117px;top:872px;" width="14" height="14" viewBox="0 0 14 14"><rect x="1.5" y="1.5" width="11" height="11" fill="none" stroke="#a78de0" stroke-width="1"/><g fill="#a78de0"><rect x="0" y="0" width="3" height="3"/><rect x="11" y="0" width="3" height="3"/><rect x="0" y="11" width="3" height="3"/><rect x="11" y="11" width="3" height="3"/></g><circle cx="7" cy="7" r="2.8" fill="#e0e0e0"/></svg>
<span style="left:1134px;top:871px;color:#c4c4c4;font-size:13px;line-height:16px;letter-spacing:0px;">BlobPlayer_Blue_9</span>
<svg style="left:1088px;top:892px;" width="9" height="8" viewBox="0 0 9 8"><path d="M0 0.5H9L4.5 7.5Z" fill="#8c8c8c"/></svg>
<svg style="left:1103px;top:886px;" width="14" height="5" viewBox="0 0 14 5"><g fill="#ff30c8"><rect x="0" y="0" width="3" height="1"/><rect x="4" y="0" width="1" height="1"/><rect x="6" y="0" width="4" height="1"/><rect x="11" y="0" width="2" height="1"/><rect x="1" y="2" width="2" height="1"/><rect x="0" y="3" width="1" height="1"/></g></svg>
<span style="left:1120px;top:887px;color:#c4c4c4;font-size:13px;line-height:16px;letter-spacing:0px;">BlobPlayer_Pink</span>
<svg style="left:1117px;top:904px;" width="14" height="14" viewBox="0 0 14 14"><rect x="1.5" y="1.5" width="11" height="11" fill="none" stroke="#a78de0" stroke-width="1"/><g fill="#a78de0"><rect x="0" y="0" width="3" height="3"/><rect x="11" y="0" width="3" height="3"/><rect x="0" y="11" width="3" height="3"/><rect x="11" y="11" width="3" height="3"/></g><circle cx="7" cy="7" r="2.8" fill="#e0e0e0"/></svg>
<span style="left:1134px;top:903px;color:#c4c4c4;font-size:13px;line-height:16px;letter-spacing:0px;">BlobPlayer_Pink_0</span>
<svg style="left:1117px;top:920px;" width="14" height="14" viewBox="0 0 14 14"><rect x="1.5" y="1.5" width="11" height="11" fill="none" stroke="#a78de0" stroke-width="1"/><g fill="#a78de0"><rect x="0" y="0" width="3" height="3"/><rect x="11" y="0" width="3" height="3"/><rect x="0" y="11" width="3" height="3"/><rect x="11" y="11" width="3" height="3"/></g><circle cx="7" cy="7" r="2.8" fill="#e0e0e0"/></svg>
<span style="left:1134px;top:919px;color:#c4c4c4;font-size:13px;line-height:16px;letter-spacing:0px;">BlobPlayer_Pink_1</span>
<svg style="left:1117px;top:936px;" width="14" height="14" viewBox="0 0 14 14"><rect x="1.5" y="1.5" width="11" height="11" fill="none" stroke="#a78de0" stroke-width="1"/><g fill="#a78de0"><rect x="0" y="0" width="3" height="3"/><rect x="11" y="0" width="3" height="3"/><rect x="0" y="11" width="3" height="3"/><rect x="11" y="11" width="3" height="3"/></g><circle cx="7" cy="7" r="2.8" fill="#e0e0e0"/></svg>
<span style="left:1134px;top:935px;color:#c4c4c4;font-size:13px;line-height:16px;letter-spacing:0px;">BlobPlayer_Pink_2</span>
<svg style="left:1117px;top:952px;" width="14" height="14" viewBox="0 0 14 14"><rect x="1.5" y="1.5" width="11" height="11" fill="none" stroke="#a78de0" stroke-width="1"/><g fill="#a78de0"><rect x="0" y="0" width="3" height="3"/><rect x="11" y="0" width="3" height="3"/><rect x="0" y="11" width="3" height="3"/><rect x="11" y="11" width="3" height="3"/></g><circle cx="7" cy="7" r="2.8" fill="#e0e0e0"/></svg>
<span style="left:1134px;top:951px;color:#c4c4c4;font-size:13px;line-height:16px;letter-spacing:0px;">BlobPlayer_Pink_3</span>
<svg style="left:1117px;top:968px;" width="14" height="14" viewBox="0 0 14 14"><rect x="1.5" y="1.5" width="11" height="11" fill="none" stroke="#a78de0" stroke-width="1"/><g fill="#a78de0"><rect x="0" y="0" width="3" height="3"/><rect x="11" y="0" width="3" height="3"/><rect x="0" y="11" width="3" height="3"/><rect x="11" y="11" width="3" height="3"/></g><circle cx="7" cy="7" r="2.8" fill="#e0e0e0"/></svg>
<span style="left:1134px;top:967px;color:#c4c4c4;font-size:13px;line-height:16px;letter-spacing:0px;">BlobPlayer_Pink_4</span>
<svg style="left:1117px;top:984px;" width="14" height="14" viewBox="0 0 14 14"><rect x="1.5" y="1.5" width="11" height="11" fill="none" stroke="#a78de0" stroke-width="1"/><g fill="#a78de0"><rect x="0" y="0" width="3" height="3"/><rect x="11" y="0" width="3" height="3"/><rect x="0" y="11" width="3" height="3"/><rect x="11" y="11" width="3" height="3"/></g><circle cx="7" cy="7" r="2.8" fill="#e0e0e0"/></svg>
<span style="left:1134px;top:983px;color:#c4c4c4;font-size:13px;line-height:16px;letter-spacing:0px;">BlobPlayer_Pink_5</span>
<div style="left:1087px;top:999px;width:401px;height:19px;background:#3c3c3c;"></div>
<div style="left:1422px;top:1007px;width:50px;height:1px;background:#5e5e5e;"></div>
<div style="left:1417px;top:1003px;width:10px;height:10px;background:#999;border-radius:5px;"></div>
<div style="left:1476px;top:694px;width:12px;height:305px;background:#353535;"></div>
<svg style="left:1478px;top:700px;" width="8" height="5" viewBox="0 0 8 5"><path d="M0 5H8L4 0Z" fill="#c4c4c4"/></svg>
<div style="left:1477px;top:712px;width:10px;height:223px;background:#5f5f5f;border-radius:5px;"></div>
<svg style="left:1478px;top:986px;" width="8" height="5" viewBox="0 0 8 5"><path d="M0 0H8L4 5Z" fill="#c4c4c4"/></svg>

<!-- p6_insp -->

<div style="left:1490px;top:73px;width:430px;height:19px;background:#282828;"></div>
<div style="left:1490px;top:73px;width:95px;height:19px;background:#3c3c3c;border-radius:3px 3px 0 0;"></div>
<svg style="left:1499px;top:77px;" width="11" height="11" viewBox="0 0 11 11"><circle cx="5.5" cy="5.5" r="5.4" fill="#c4c4c4"/><path d="M5.5 4.6V8.6" stroke="#3c3c3c" stroke-width="1.5"/><circle cx="5.5" cy="2.8" r="0.9" fill="#3c3c3c"/></svg>
<span style="left:1514px;top:75px;color:#d2d2d2;font-size:12px;line-height:16px;letter-spacing:0.3px;">Inspector</span>
<svg style="left:1884px;top:77px;" width="10" height="11" viewBox="0 0 10 11"><rect x="1" y="6.5" width="7.600" height="3.500" fill="none" stroke="#c4c4c4" stroke-width="1.1"/><path d="M2.4 6.500V3.400A2.300 2.300 0 0 1 7 3.400V3.900" stroke="#c4c4c4" stroke-width="1.1" fill="none"/></svg>
<svg style="left:1904px;top:77px;" width="4" height="12" viewBox="0 0 4 12"><circle cx="2" cy="1.6" r="1.25" fill="#c4c4c4"/><circle cx="2" cy="5.4" r="1.25" fill="#c4c4c4"/><circle cx="2" cy="9.2" r="1.25" fill="#c4c4c4"/></svg>
<div style="left:1490px;top:92px;width:430px;height:926px;background:#383838;"></div>
<div style="left:1908px;top:92px;width:12px;height:744px;background:#353535;"></div>
<svg style="left:1910px;top:98px;" width="8" height="5" viewBox="0 0 8 5"><path d="M0 5H8L4 0Z" fill="#c4c4c4"/></svg>
<div style="left:1909px;top:110px;width:10px;height:403px;background:#5f5f5f;border-radius:5px;"></div>
<svg style="left:1910px;top:825px;" width="8" height="5" viewBox="0 0 8 5"><path d="M0 0H8L4 5Z" fill="#c4c4c4"/></svg>
<svg style="left:1497px;top:103px;" width="21" height="21" viewBox="0 0 21 21"><path d="M10.5 1L19.5 5.8V15.2L10.5 20L1.5 15.2V5.8Z M1.5 5.8L10.5 10.6L19.5 5.8 M10.5 10.6V20" stroke="#d0d0d0" stroke-width="1.3" fill="none" stroke-linejoin="round"/></svg>
<svg style="left:1517px;top:123px;" width="7" height="4" viewBox="0 0 7 4"><path d="M0 0H7L3.5 4Z" fill="#c4c4c4"/></svg>
<div style="left:1538px;top:103px;width:14px;height:14px;background:#2a2a2a;border:1px solid #212121;border-top-color:#0d0d0d;border-radius:3px;"></div>
<svg style="left:1540px;top:105px;" width="10" height="10" viewBox="0 0 10 10"><path d="M1.5 5.2L4 7.8L8.8 2.2" stroke="#e4e4e4" stroke-width="1.6" fill="none"/></svg>
<div style="left:1558px;top:101px;width:268px;height:18px;background:#2a2a2a;border:1px solid #212121;border-top-color:#0d0d0d;border-radius:3px;"></div>
<span style="left:1561px;top:103px;color:#d2d2d2;font-size:12px;line-height:16px;font-weight:bold;letter-spacing:1.1px;">Text (TMP)</span>
<div style="left:1829px;top:103px;width:14px;height:14px;background:#2a2a2a;border:1px solid #212121;border-top-color:#0d0d0d;border-radius:3px;"></div>
<span style="left:1847px;top:102.5px;color:#c4c4c4;font-size:12px;line-height:16px;letter-spacing:0.2px;">Static</span>
<svg style="left:1893px;top:108px;" width="8" height="4" viewBox="0 0 8 4"><path d="M0 0H8L4.0 4Z" fill="#c4c4c4"/></svg>
<span style="left:1531px;top:126px;color:#c4c4c4;font-size:12px;line-height:16px;letter-spacing:0.2px;">Tag</span>
<div style="left:1558px;top:125px;width:151px;height:18px;background:#515151;border:1px solid #303030;border-radius:3px;"></div>
<span style="left:1562px;top:126.0px;color:#d2d2d2;font-size:12px;line-height:16px;letter-spacing:0.2px;">Untagged</span>
<svg style="left:1695px;top:132.0px;" width="8" height="4" viewBox="0 0 8 4"><path d="M0 0H8L4.0 4Z" fill="#c4c4c4"/></svg>
<span style="left:1723px;top:126px;color:#c4c4c4;font-size:12px;line-height:16px;letter-spacing:0.2px;">Layer</span>
<div style="left:1762px;top:125px;width:140px;height:18px;background:#515151;border:1px solid #303030;border-radius:3px;"></div>
<span style="left:1766px;top:126.0px;color:#d2d2d2;font-size:12px;line-height:16px;letter-spacing:0.2px;">UI</span>
<svg style="left:1888px;top:132.0px;" width="8" height="4" viewBox="0 0 8 4"><path d="M0 0H8L4.0 4Z" fill="#c4c4c4"/></svg>
<div style="left:1490px;top:151px;width:418px;height:1px;background:#1a1a1a;"></div>
<div style="left:1490px;top:152px;width:418px;height:20px;background:#3e3e3e;"></div>
<svg style="left:1496px;top:158px;" width="9" height="8" viewBox="0 0 9 8"><path d="M0 0.5H9L4.5 7.5Z" fill="#8c8c8c"/></svg>
<svg style="left:1511px;top:155px;" width="14" height="14" viewBox="0 0 14 14"><g fill="#d0d0d0"><path d="M0.5 0.5L5.5 2L2 5.5Z"/><path d="M13.5 0.5L8.5 2L12 5.5Z"/><path d="M0.5 13.5L5.5 12L2 8.5Z"/><path d="M13.5 13.5L8.5 12L12 8.5Z"/></g></svg>
<span style="left:1550px;top:154px;color:#d2d2d2;font-size:12px;line-height:16px;font-weight:bold;letter-spacing:0.75px;">Rect Transform</span>
<svg style="left:1849px;top:157px;" width="10" height="10" viewBox="0 0 10 10"><circle cx="5" cy="5" r="5" fill="#c4c4c4"/><path d="M3.4 3.9A1.7 1.7 0 1 1 5.6 5.5Q5 5.8 5 6.6" stroke="#3e3e3e" stroke-width="1.2" fill="none"/><circle cx="5" cy="8.1" r="0.7" fill="#3e3e3e"/></svg>
<svg style="left:1869px;top:157px;" width="11" height="10" viewBox="0 0 11 10"><path d="M0 2.5H11M0 7.5H11" stroke="#c4c4c4" stroke-width="1.1"/><path d="M7.5 0.5V4.5M3.5 5.5V9.5" stroke="#c4c4c4" stroke-width="1.6"/></svg>
<svg style="left:1892px;top:156px;" width="4" height="12" viewBox="0 0 4 12"><circle cx="2" cy="1.6" r="1.25" fill="#c4c4c4"/><circle cx="2" cy="5.4" r="1.25" fill="#c4c4c4"/><circle cx="2" cy="9.2" r="1.25" fill="#c4c4c4"/></svg>
<span style="left:1518px;top:180px;color:#c4c4c4;font-size:11px;line-height:16px;letter-spacing:0.1px;">stretch</span>
<span style="left:1487px;top:210px;width:34px;text-align:center;color:#c4c4c4;font-size:11px;line-height:16px;letter-spacing:0.1px;transform:rotate(-90deg);">stretch</span>
<svg style="left:1515px;top:199px;" width="40" height="40" viewBox="0 0 40 40"><rect x="2.5" y="2.5" width="35" height="35" fill="none" stroke="#7a7a7a" stroke-width="1" shape-rendering="crispEdges"/><rect x="11.5" y="11.5" width="16" height="16" fill="none" stroke="#b0b0b0" stroke-width="1" shape-rendering="crispEdges"/><g fill="#f0a814"><rect x="1.5" y="1.5" width="2" height="2"/><rect x="36.5" y="1.5" width="2" height="2"/><rect x="1.5" y="36.5" width="2" height="2"/><rect x="36.5" y="36.5" width="2" height="2"/></g><path d="M19.5 12.5V26.5M12.5 19.5H26.5" stroke="#1fa9e6" stroke-width="1.1"/><path d="M17.5 14.5L19.5 12.5L21.5 14.5M17.5 24.5L19.5 26.5L21.5 24.5M14.5 17.5L12.5 19.5L14.5 21.5M24.5 17.5L26.5 19.5L24.5 21.5" stroke="#1fa9e6" stroke-width="1.1" fill="none"/></svg>
<span style="left:1656px;top:180.5px;color:#c4c4c4;font-size:12px;line-height:16px;letter-spacing:0.2px;">Left</span>
<span style="left:1739px;top:180.5px;color:#c4c4c4;font-size:12px;line-height:16px;letter-spacing:0.2px;">Top</span>
<span style="left:1823px;top:180.5px;color:#c4c4c4;font-size:12px;line-height:16px;letter-spacing:0.2px;">Pos Z</span>
<div style="left:1656px;top:197px;width:80px;height:17px;background:#2a2a2a;border:1px solid #212121;border-top-color:#0d0d0d;border-radius:3px;"></div>
<span style="left:1659px;top:198.0px;color:#d2d2d2;font-size:12px;line-height:16px;letter-spacing:0.2px;">0</span>
<div style="left:1739px;top:197px;width:80px;height:17px;background:#2a2a2a;border:1px solid #212121;border-top-color:#0d0d0d;border-radius:3px;"></div>
<span style="left:1742px;top:198.0px;color:#d2d2d2;font-size:12px;line-height:16px;letter-spacing:0.2px;">22</span>
<div style="left:1823px;top:197px;width:80px;height:17px;background:#2a2a2a;border:1px solid #212121;border-top-color:#0d0d0d;border-radius:3px;"></div>
<span style="left:1826px;top:198.0px;color:#d2d2d2;font-size:12px;line-height:16px;letter-spacing:0.2px;">0</span>
<span style="left:1656px;top:216.5px;color:#c4c4c4;font-size:12px;line-height:16px;letter-spacing:0.2px;">Right</span>
<span style="left:1739px;top:216.5px;color:#c4c4c4;font-size:12px;line-height:16px;letter-spacing:0.2px;">Bottom</span>
<div style="left:1656px;top:233px;width:80px;height:17px;background:#2a2a2a;border:1px solid #212121;border-top-color:#0d0d0d;border-radius:3px;"></div>
<span style="left:1659px;top:234.0px;color:#d2d2d2;font-size:12px;line-height:16px;letter-spacing:0.2px;">0</span>
<div style="left:1739px;top:233px;width:80px;height:17px;background:#2a2a2a;border:1px solid #212121;border-top-color:#0d0d0d;border-radius:3px;"></div>
<span style="left:1742px;top:234.0px;color:#d2d2d2;font-size:12px;line-height:16px;letter-spacing:0.2px;">-22</span>
<div style="left:1851px;top:231px;width:25px;height:20px;background:#515151;border:1px solid #303030;border-radius:3px 0 0 3px;"></div>
<div style="left:1875px;top:231px;width:28px;height:20px;background:#515151;border:1px solid #303030;border-radius:0 3px 3px 0;"></div>
<svg style="left:1858px;top:235.5px;" width="12" height="11" viewBox="0 0 12 11"><rect x="0.5" y="0.5" width="11" height="10" fill="none" stroke="#9a9a9a" stroke-width="1" stroke-dasharray="2 1.5"/></svg>
<span style="left:1885px;top:233px;color:#9a9a9a;font-size:12px;line-height:16px;">R</span>
<svg style="left:1497px;top:258px;" width="9" height="8" viewBox="0 0 9 8"><path d="M0 0.5H9L4.5 7.5Z" fill="#8c8c8c"/></svg>
<span style="left:1509px;top:254.5px;color:#c4c4c4;font-size:12px;line-height:16px;letter-spacing:0.2px;">Anchors</span>
<span style="left:1524px;top:272px;color:#c4c4c4;font-size:12px;line-height:16px;letter-spacing:0.2px;">Min</span>
<span style="left:1656px;top:272px;color:#c4c4c4;font-size:12px;line-height:16px;letter-spacing:0.2px;">X</span>
<div style="left:1667px;top:271px;width:69px;height:17px;background:#2a2a2a;border:1px solid #212121;border-top-color:#0d0d0d;border-radius:3px;"></div>
<span style="left:1670px;top:272.0px;color:#d2d2d2;font-size:12px;line-height:16px;letter-spacing:0.2px;">0</span>
<span style="left:1740px;top:272px;color:#c4c4c4;font-size:12px;line-height:16px;letter-spacing:0.2px;">Y</span>
<div style="left:1751px;top:271px;width:69px;height:17px;background:#2a2a2a;border:1px solid #212121;border-top-color:#0d0d0d;border-radius:3px;"></div>
<span style="left:1754px;top:272.0px;color:#d2d2d2;font-size:12px;line-height:16px;letter-spacing:0.2px;">0</span>
<span style="left:1524px;top:292px;color:#c4c4c4;font-size:12px;line-height:16px;letter-spacing:0.2px;">Max</span>
<span style="left:1656px;top:292px;color:#c4c4c4;font-size:12px;line-height:16px;letter-spacing:0.2px;">X</span>
<div style="left:1667px;top:291px;width:69px;height:17px;background:#2a2a2a;border:1px solid #212121;border-top-color:#0d0d0d;border-radius:3px;"></div>
<span style="left:1670px;top:292.0px;color:#d2d2d2;font-size:12px;line-height:16px;letter-spacing:0.2px;">1</span>
<span style="left:1740px;top:292px;color:#c4c4c4;font-size:12px;line-height:16px;letter-spacing:0.2px;">Y</span>
<div style="left:1751px;top:291px;width:69px;height:17px;background:#2a2a2a;border:1px solid #212121;border-top-color:#0d0d0d;border-radius:3px;"></div>
<span style="left:1754px;top:292.0px;color:#d2d2d2;font-size:12px;line-height:16px;letter-spacing:0.2px;">1</span>
<span style="left:1509px;top:314.5px;color:#c4c4c4;font-size:12px;line-height:16px;letter-spacing:0.2px;">Pivot</span>
<span style="left:1656px;top:314.5px;color:#c4c4c4;font-size:12px;line-height:16px;letter-spacing:0.2px;">X</span>
<div style="left:1667px;top:314px;width:69px;height:17px;background:#2a2a2a;border:1px solid #212121;border-top-color:#0d0d0d;border-radius:3px;"></div>
<span style="left:1670px;top:315.0px;color:#d2d2d2;font-size:12px;line-height:16px;letter-spacing:0.2px;">0.5</span>
<span style="left:1740px;top:314.5px;color:#c4c4c4;font-size:12px;line-height:16px;letter-spacing:0.2px;">Y</span>
<div style="left:1751px;top:314px;width:69px;height:17px;background:#2a2a2a;border:1px solid #212121;border-top-color:#0d0d0d;border-radius:3px;"></div>
<span style="left:1754px;top:315.0px;color:#d2d2d2;font-size:12px;line-height:16px;letter-spacing:0.2px;">0.5</span>
<span style="left:1509px;top:342.5px;color:#c4c4c4;font-size:12px;line-height:16px;letter-spacing:0.2px;">Rotation</span>
<span style="left:1659px;top:342.5px;color:#c4c4c4;font-size:12px;line-height:16px;letter-spacing:0.2px;">X</span>
<div style="left:1674px;top:342px;width:63px;height:17px;background:#2a2a2a;border:1px solid #212121;border-top-color:#0d0d0d;border-radius:3px;"></div>
<span style="left:1677px;top:343.0px;color:#d2d2d2;font-size:12px;line-height:16px;letter-spacing:0.2px;">0</span>
<span style="left:1742px;top:342.5px;color:#c4c4c4;font-size:12px;line-height:16px;letter-spacing:0.2px;">Y</span>
<div style="left:1757px;top:342px;width:63px;height:17px;background:#2a2a2a;border:1px solid #212121;border-top-color:#0d0d0d;border-radius:3px;"></div>
<span style="left:1760px;top:343.0px;color:#d2d2d2;font-size:12px;line-height:16px;letter-spacing:0.2px;">0</span>
<span style="left:1826px;top:342.5px;color:#c4c4c4;font-size:12px;line-height:16px;letter-spacing:0.2px;">Z</span>
<div style="left:1840px;top:342px;width:63px;height:17px;background:#2a2a2a;border:1px solid #212121;border-top-color:#0d0d0d;border-radius:3px;"></div>
<span style="left:1843px;top:343.0px;color:#d2d2d2;font-size:12px;line-height:16px;letter-spacing:0.2px;">0</span>
<span style="left:1509px;top:362px;color:#c4c4c4;font-size:12px;line-height:16px;letter-spacing:0.2px;">Scale</span>
<span style="left:1659px;top:362px;color:#c4c4c4;font-size:12px;line-height:16px;letter-spacing:0.2px;">X</span>
<div style="left:1674px;top:361px;width:63px;height:17px;background:#2a2a2a;border:1px solid #212121;border-top-color:#0d0d0d;border-radius:3px;"></div>
<span style="left:1677px;top:362.0px;color:#d2d2d2;font-size:12px;line-height:16px;letter-spacing:0.2px;">1</span>
<span style="left:1742px;top:362px;color:#c4c4c4;font-size:12px;line-height:16px;letter-spacing:0.2px;">Y</span>
<div style="left:1757px;top:361px;width:63px;height:17px;background:#2a2a2a;border:1px solid #212121;border-top-color:#0d0d0d;border-radius:3px;"></div>
<span style="left:1760px;top:362.0px;color:#d2d2d2;font-size:12px;line-height:16px;letter-spacing:0.2px;">1</span>
<span style="left:1826px;top:362px;color:#c4c4c4;font-size:12px;line-height:16px;letter-spacing:0.2px;">Z</span>
<div style="left:1840px;top:361px;width:63px;height:17px;background:#2a2a2a;border:1px solid #212121;border-top-color:#0d0d0d;border-radius:3px;"></div>
<span style="left:1843px;top:362.0px;color:#d2d2d2;font-size:12px;line-height:16px;letter-spacing:0.2px;">1</span>
<svg style="left:1636px;top:364px;" width="14" height="11" viewBox="0 0 14 11"><path d="M5.5 2.5H4A3 3 0 0 0 4 8.5H5.5M8.5 2.5H10A3 3 0 0 1 10 8.5H8.5" stroke="#c4c4c4" stroke-width="1.2" fill="none"/><path d="M1.5 0.5L12.5 10.5" stroke="#c4c4c4" stroke-width="1.2"/></svg>
<div style="left:1490px;top:388px;width:418px;height:1px;background:#1a1a1a;"></div>
<div style="left:1490px;top:389px;width:418px;height:20px;background:#3e3e3e;"></div>
<svg style="left:1496px;top:395px;" width="9" height="8" viewBox="0 0 9 8"><path d="M0 0.5H9L4.5 7.5Z" fill="#8c8c8c"/></svg>
<svg style="left:1509.5px;top:392px;" width="17" height="14" viewBox="0 0 17 14"><path d="M0.800 7C3.800 0.800 13.200 0.800 16.200 7C13.200 13.200 3.800 13.200 0.800 7Z" fill="none" stroke="#e8e8e8" stroke-width="1.250"/><circle cx="8.500" cy="7" r="3.100" fill="none" stroke="#e8e8e8" stroke-width="1.200"/><circle cx="8.500" cy="7" r="1.100" fill="#e8e8e8"/></svg>
<span style="left:1550px;top:391px;color:#d2d2d2;font-size:12px;line-height:16px;font-weight:bold;letter-spacing:0.75px;">Canvas Renderer</span>
<svg style="left:1849px;top:394px;" width="10" height="10" viewBox="0 0 10 10"><circle cx="5" cy="5" r="5" fill="#c4c4c4"/><path d="M3.4 3.9A1.7 1.7 0 1 1 5.6 5.5Q5 5.8 5 6.6" stroke="#3e3e3e" stroke-width="1.2" fill="none"/><circle cx="5" cy="8.1" r="0.7" fill="#3e3e3e"/></svg>
<svg style="left:1869px;top:394px;" width="11" height="10" viewBox="0 0 11 10"><path d="M0 2.5H11M0 7.5H11" stroke="#c4c4c4" stroke-width="1.1"/><path d="M7.5 0.5V4.5M3.5 5.5V9.5" stroke="#c4c4c4" stroke-width="1.6"/></svg>
<svg style="left:1892px;top:393px;" width="4" height="12" viewBox="0 0 4 12"><circle cx="2" cy="1.6" r="1.25" fill="#c4c4c4"/><circle cx="2" cy="5.4" r="1.25" fill="#c4c4c4"/><circle cx="2" cy="9.2" r="1.25" fill="#c4c4c4"/></svg>
<span style="left:1509px;top:415.5px;color:#c4c4c4;font-size:12px;line-height:16px;letter-spacing:0.38px;">Cull Transparent Mesh</span>
<div style="left:1658px;top:416px;width:14px;height:14px;background:#2a2a2a;border:1px solid #212121;border-top-color:#0d0d0d;border-radius:3px;"></div>
<svg style="left:1660px;top:418px;" width="10" height="10" viewBox="0 0 10 10"><path d="M1.5 5.2L4 7.8L8.8 2.2" stroke="#e4e4e4" stroke-width="1.6" fill="none"/></svg>
<div style="left:1490px;top:441px;width:418px;height:1px;background:#1a1a1a;"></div>
<div style="left:1490px;top:442px;width:418px;height:20px;background:#3e3e3e;"></div>
<svg style="left:1496px;top:448px;" width="9" height="8" viewBox="0 0 9 8"><path d="M0 0.5H9L4.5 7.5Z" fill="#8c8c8c"/></svg>
<div style="left:1510px;top:444px;width:16px;height:16px;border:1px solid #1fb4f0;"></div>
<span style="left:1510px;top:444px;color:#1fb4f0;font-size:14px;line-height:16px;width:16px;text-align:center;font-weight:bold;font-family:'Liberation Serif',serif;">T</span>
<div style="left:1530.5px;top:445px;width:14px;height:14px;background:#2a2a2a;border:1px solid #212121;border-top-color:#0d0d0d;border-radius:3px;"></div>
<svg style="left:1532.5px;top:447px;" width="10" height="10" viewBox="0 0 10 10"><path d="M1.5 5.2L4 7.8L8.8 2.2" stroke="#e4e4e4" stroke-width="1.6" fill="none"/></svg>
<span style="left:1550px;top:444px;color:#d2d2d2;font-size:12px;line-height:16px;font-weight:bold;letter-spacing:1.05px;">TextMeshPro - Text (UI)</span>
<svg style="left:1849px;top:447px;" width="10" height="10" viewBox="0 0 10 10"><circle cx="5" cy="5" r="5" fill="#c4c4c4"/><path d="M3.4 3.9A1.7 1.7 0 1 1 5.6 5.5Q5 5.8 5 6.6" stroke="#3e3e3e" stroke-width="1.2" fill="none"/><circle cx="5" cy="8.1" r="0.7" fill="#3e3e3e"/></svg>
<svg style="left:1869px;top:447px;" width="11" height="10" viewBox="0 0 11 10"><path d="M0 2.5H11M0 7.5H11" stroke="#c4c4c4" stroke-width="1.1"/><path d="M7.5 0.5V4.5M3.5 5.5V9.5" stroke="#c4c4c4" stroke-width="1.6"/></svg>
<svg style="left:1892px;top:446px;" width="4" height="12" viewBox="0 0 4 12"><circle cx="2" cy="1.6" r="1.25" fill="#c4c4c4"/><circle cx="2" cy="5.4" r="1.25" fill="#c4c4c4"/><circle cx="2" cy="9.2" r="1.25" fill="#c4c4c4"/></svg>
<div style="left:1500px;top:475px;width:403px;height:22px;background:#4f4f4f;border:1px solid #303030;"></div>
<span style="left:1508px;top:480.5px;color:#d2d2d2;font-size:12px;line-height:16px;font-weight:bold;letter-spacing:0.75px;">Text Input</span>
<span style="left:1766px;top:479.0px;color:#c4c4c4;font-size:12px;line-height:16px;letter-spacing:0.3px;">Enable RTL Editor</span>
<div style="left:1877px;top:481px;width:14px;height:14px;background:#2a2a2a;border:1px solid #212121;border-top-color:#0d0d0d;border-radius:3px;"></div>
<div style="left:1508px;top:517px;width:395px;height:78px;background:#2a2a2a;border:1px solid #212121;border-top-color:#0d0d0d;border-radius:3px;"></div>
<span style="left:1511px;top:519px;color:#d2d2d2;font-size:12px;line-height:16px;font-size:11.5px;">Clica</span>
<span style="left:1509px;top:598.0px;color:#c4c4c4;font-size:12px;line-height:16px;letter-spacing:0.2px;">Text Style</span>
<div style="left:1658px;top:597px;width:244px;height:18px;background:#515151;border:1px solid #303030;border-radius:3px;"></div>
<span style="left:1662px;top:598.0px;color:#d2d2d2;font-size:12px;line-height:16px;letter-spacing:0.2px;">Normal</span>
<svg style="left:1888px;top:604.0px;" width="8" height="4" viewBox="0 0 8 4"><path d="M0 0H8L4.0 4Z" fill="#c4c4c4"/></svg>
<div style="left:1500px;top:616px;width:403px;height:22px;background:#4f4f4f;border:1px solid #303030;"></div>
<span style="left:1508px;top:621px;color:#d2d2d2;font-size:12px;line-height:16px;font-weight:bold;letter-spacing:0.75px;">Main Settings</span>
<span style="left:1509px;top:641.0px;color:#c4c4c4;font-size:12px;line-height:16px;letter-spacing:0.2px;">Font Asset</span>
<div style="left:1658px;top:641px;width:245px;height:17px;background:#2a2a2a;border:1px solid #212121;border-top-color:#0d0d0d;border-radius:3px;"></div>
<div style="left:1661px;top:643px;width:12px;height:12px;border:1px solid #1fb4f0;"></div>
<span style="left:1661px;top:641.5px;color:#1fb4f0;font-size:11px;line-height:16px;width:12px;text-align:center;font-weight:bold;font-family:'Liberation Serif',serif;">F</span>
<span class="clip" style="left:1674px;top:641.5px;width:210px;height:16px;color:#d2d2d2;font-size:12px;line-height:16px;letter-spacing:0.18px;">LiberationSans SDF (TMP_Font Asset)</span>
<div style="left:1884px;top:642px;width:18px;height:15px;background:#3a3a3a;border-radius:0 3px 3px 0;"></div>
<svg style="left:1887px;top:644px;" width="11" height="11" viewBox="0 0 11 11"><circle cx="5.5" cy="5.5" r="4.6" fill="none" stroke="#c4c4c4" stroke-width="1.1"/><circle cx="5.5" cy="5.5" r="1.7" fill="#c4c4c4"/></svg>
<span style="left:1509px;top:660.5px;color:#c4c4c4;font-size:12px;line-height:16px;letter-spacing:0.2px;">Material Preset</span>
<div style="left:1658px;top:660px;width:244px;height:18px;background:#515151;border:1px solid #303030;border-radius:3px;"></div>
<span style="left:1662px;top:661.0px;color:#d2d2d2;font-size:12px;line-height:16px;letter-spacing:-0.25px;">LiberationSans SDF Material</span>
<svg style="left:1888px;top:667.0px;" width="8" height="4" viewBox="0 0 8 4"><path d="M0 0H8L4.0 4Z" fill="#c4c4c4"/></svg>
<span style="left:1509px;top:680.0px;color:#c4c4c4;font-size:12px;line-height:16px;letter-spacing:0.2px;">Font Style</span>
<div style="left:1657px;top:679px;width:33px;height:18px;background:#515151;border:1px solid #3a3a3a;border-radius:3px 0 0 3px;"></div>
<span style="left:1657px;top:680.5px;color:#d2d2d2;font-size:12px;line-height:16px;width:33px;text-align:center;">B</span>
<div style="left:1690px;top:679px;width:35px;height:18px;background:#515151;border:1px solid #3a3a3a;border-radius:0;border-left:none;"></div>
<span style="left:1690px;top:680.5px;color:#d2d2d2;font-size:12px;line-height:16px;width:35px;text-align:center;">I</span>
<div style="left:1725px;top:679px;width:36px;height:18px;background:#515151;border:1px solid #3a3a3a;border-radius:0;border-left:none;"></div>
<span style="left:1725px;top:680.5px;color:#d2d2d2;font-size:12px;line-height:16px;width:36px;text-align:center;">U</span>
<div style="left:1761px;top:679px;width:35px;height:18px;background:#515151;border:1px solid #3a3a3a;border-radius:0 3px 3px 0;border-left:none;"></div>
<span style="left:1761px;top:680.5px;color:#d2d2d2;font-size:12px;line-height:16px;width:35px;text-align:center;">S</span>
<div style="left:1798px;top:679px;width:33px;height:18px;background:#515151;border:1px solid #3a3a3a;border-radius:3px 0 0 3px;"></div>
<span style="left:1798px;top:680.5px;color:#d2d2d2;font-size:12px;line-height:16px;width:33px;text-align:center;">ab</span>
<div style="left:1831px;top:679px;width:36px;height:18px;background:#515151;border:1px solid #3a3a3a;border-radius:0;border-left:none;"></div>
<span style="left:1831px;top:680.5px;color:#d2d2d2;font-size:12px;line-height:16px;width:36px;text-align:center;">AB</span>
<div style="left:1867px;top:679px;width:36px;height:18px;background:#515151;border:1px solid #3a3a3a;border-radius:0 3px 3px 0;border-left:none;"></div>
<span style="left:1867px;top:680.5px;color:#d2d2d2;font-size:12px;line-height:16px;width:36px;text-align:center;">SC</span>
<span style="left:1509px;top:702.0px;color:#c4c4c4;font-size:12px;line-height:16px;letter-spacing:0.2px;">Font Size</span>
<div style="left:1658px;top:702px;width:48px;height:17px;background:#2a2a2a;border:1px solid #212121;border-top-color:#0d0d0d;border-radius:3px;"></div>
<span style="left:1661px;top:703.0px;color:#d2d2d2;font-size:12px;line-height:16px;letter-spacing:0.2px;">24</span>
<span style="left:1524px;top:722.0px;color:#c4c4c4;font-size:12px;line-height:16px;letter-spacing:0.2px;">Auto Size</span>
<div style="left:1658px;top:723px;width:14px;height:14px;background:#2a2a2a;border:1px solid #212121;border-top-color:#0d0d0d;border-radius:3px;"></div>
<span style="left:1509px;top:750.0px;color:#c4c4c4;font-size:12px;line-height:16px;letter-spacing:0.2px;">Vertex Color</span>
<div style="left:1658px;top:750px;width:227px;height:17px;background:#ffffff;border-radius:2px 0 0 2px;"></div>
<div style="left:1885px;top:750px;width:18px;height:17px;background:#323232;border-radius:0 3px 3px 0;"></div>
<svg style="left:1888px;top:752px;" width="12" height="12" viewBox="0 0 12 12"><path d="M1 11L1.6 8.6L6.8 3.4L8.6 5.2L3.4 10.4Z" fill="#c4c4c4"/><path d="M6 2.6L9.4 6" stroke="#c4c4c4" stroke-width="1.6"/><path d="M8 4L10 2" stroke="#c4c4c4" stroke-width="2.6" stroke-linecap="round"/></svg>
<span style="left:1509px;top:770.0px;color:#c4c4c4;font-size:12px;line-height:16px;letter-spacing:0.2px;">Color Gradient</span>
<div style="left:1658px;top:771px;width:14px;height:14px;background:#2a2a2a;border:1px solid #212121;border-top-color:#0d0d0d;border-radius:3px;"></div>
<span style="left:1509px;top:790.0px;color:#c4c4c4;font-size:12px;line-height:16px;letter-spacing:0.2px;">Override Tags</span>
<div style="left:1658px;top:791px;width:14px;height:14px;background:#2a2a2a;border:1px solid #212121;border-top-color:#0d0d0d;border-radius:3px;"></div>
<span style="left:1509px;top:818.0px;color:#c4c4c4;font-size:12px;line-height:16px;letter-spacing:0.3px;">Spacing Options (em)</span>
<span style="left:1657px;top:818.0px;color:#c4c4c4;font-size:12px;line-height:16px;letter-spacing:0.3px;">Character</span>
<div style="left:1725px;top:818px;width:53px;height:17px;background:#2a2a2a;border:1px solid #212121;border-top-color:#0d0d0d;border-radius:3px;"></div>
<span style="left:1728px;top:819.0px;color:#d2d2d2;font-size:12px;line-height:16px;letter-spacing:0.2px;">0</span>
<span style="left:1782px;top:818.0px;color:#c4c4c4;font-size:12px;line-height:16px;letter-spacing:0.3px;">Word</span>
<div style="left:1850px;top:818px;width:53px;height:17px;background:#2a2a2a;border:1px solid #212121;border-top-color:#0d0d0d;border-radius:3px;"></div>
<span style="left:1853px;top:819.0px;color:#d2d2d2;font-size:12px;line-height:16px;letter-spacing:0.2px;">0</span>
<svg style="left:1529px;top:526px;" width="56" height="42" viewBox="0 0 56 42"><path d="M46.2 31.5L24.6 18.7" stroke="#fff" stroke-width="2"/><path d="M10.0 10.0L28.9 15.4L23.8 24.0Z" fill="#fff"/></svg>
<svg style="left:1673px;top:704px;" width="53" height="34" viewBox="0 0 53 34"><path d="M42.9 23.7L25.7 16.5" stroke="#fff" stroke-width="2"/><path d="M10.0 10.0L29.5 12.7L25.6 21.9Z" fill="#fff"/></svg>
<svg style="left:1718px;top:712px;" width="20" height="47" viewBox="0 0 20 47"><path d="M10.3 10L10.2 19.8" stroke="#fff" stroke-width="2"/><path d="M10.0 36.8L5.2 17.7L15.2 17.9Z" fill="#fff"/></svg>
<div style="left:1490px;top:836px;width:430px;height:1px;background:#1f1f1f;"></div>
<div style="left:1490px;top:837px;width:430px;height:20px;background:#3c3c3c;border-bottom:1px solid #2a2a2a;"></div>
<span style="left:1496px;top:839px;color:#d2d2d2;font-size:12px;line-height:16px;font-weight:bold;letter-spacing:0.75px;">Layout Properties</span>
<div style="left:1616px;top:846px;width:286px;height:1px;background:#6a6a6a;"></div>
<div style="left:1616px;top:849px;width:286px;height:1px;background:#6a6a6a;"></div>
<div style="left:1903px;top:837px;width:1px;height:20px;background:#2a2a2a;"></div>
<svg style="left:1910px;top:841px;" width="4" height="12" viewBox="0 0 4 12"><circle cx="2" cy="1.6" r="1.25" fill="#c4c4c4"/><circle cx="2" cy="5.4" r="1.25" fill="#c4c4c4"/><circle cx="2" cy="9.2" r="1.25" fill="#c4c4c4"/></svg>
<span style="left:1496px;top:864px;color:#d2d2d2;font-size:12px;line-height:16px;font-weight:bold;letter-spacing:0.75px;">Property</span>
<span style="left:1606px;top:864px;color:#d2d2d2;font-size:12px;line-height:16px;font-weight:bold;letter-spacing:0.75px;">Value</span>
<span style="left:1706px;top:864px;color:#d2d2d2;font-size:12px;line-height:16px;font-weight:bold;letter-spacing:0.75px;">Source</span>
<span style="left:1496px;top:884.0px;color:#c4c4c4;font-size:12px;line-height:16px;letter-spacing:0.3px;">Min Width</span>
<span style="left:1606px;top:884.0px;color:#c4c4c4;font-size:12px;line-height:16px;letter-spacing:0.3px;">0</span>
<span style="left:1706px;top:884.0px;color:#c4c4c4;font-size:12px;line-height:16px;letter-spacing:0.3px;">TextMeshProUGUI</span>
<span style="left:1496px;top:902.0px;color:#c4c4c4;font-size:12px;line-height:16px;letter-spacing:0.3px;">Min Height</span>
<span style="left:1606px;top:902.0px;color:#c4c4c4;font-size:12px;line-height:16px;letter-spacing:0.3px;">0</span>
<span style="left:1706px;top:902.0px;color:#c4c4c4;font-size:12px;line-height:16px;letter-spacing:0.3px;">TextMeshProUGUI</span>
<span style="left:1496px;top:920.0px;color:#c4c4c4;font-size:12px;line-height:16px;letter-spacing:0.3px;">Preferred Width</span>
<span style="left:1606px;top:920.0px;color:#c4c4c4;font-size:12px;line-height:16px;letter-spacing:0.3px;">53.31</span>
<span style="left:1706px;top:920.0px;color:#c4c4c4;font-size:12px;line-height:16px;letter-spacing:0.3px;">TextMeshProUGUI</span>
<span style="left:1496px;top:938.0px;color:#c4c4c4;font-size:12px;line-height:16px;letter-spacing:0.3px;">Preferred Height</span>
<span style="left:1606px;top:938.0px;color:#c4c4c4;font-size:12px;line-height:16px;letter-spacing:0.3px;">26.82</span>
<span style="left:1706px;top:938.0px;color:#c4c4c4;font-size:12px;line-height:16px;letter-spacing:0.3px;">TextMeshProUGUI</span>
<span style="left:1496px;top:956.0px;color:#c4c4c4;font-size:12px;line-height:16px;letter-spacing:0.3px;">Flexible Width</span>
<span style="left:1606px;top:956.0px;color:#c4c4c4;font-size:12px;line-height:16px;letter-spacing:0.3px;">disabled</span>
<span style="left:1706px;top:956.0px;color:#c4c4c4;font-size:12px;line-height:16px;letter-spacing:0.3px;">none</span>
<span style="left:1496px;top:974.0px;color:#c4c4c4;font-size:12px;line-height:16px;letter-spacing:0.3px;">Flexible Height</span>
<span style="left:1606px;top:974.0px;color:#c4c4c4;font-size:12px;line-height:16px;letter-spacing:0.3px;">disabled</span>
<span style="left:1706px;top:974.0px;color:#c4c4c4;font-size:12px;line-height:16px;letter-spacing:0.3px;">none</span>
<span class="clip" style="left:1496px;top:1002px;height:10px;width:300px;color:#c4c4c4;font-size:12px;line-height:16px;letter-spacing:0.3px;">Add a LayoutElement to override values.</span>
<div style="left:1490px;top:1012px;width:430px;height:6px;background:#3c3c3c;border-top:1px solid #232323;"></div>

<!-- p7_bottom -->

<div style="left:0px;top:1018px;width:1920px;height:22px;background:#191919;"></div>
<svg style="left:3px;top:1023px;" width="12" height="12" viewBox="0 0 12 12"><circle cx="6" cy="6" r="6" fill="#d0d0d0"/><path d="M6 2.6V7" stroke="#191919" stroke-width="1.7"/><circle cx="6" cy="9.2" r="1" fill="#191919"/></svg>
<span style="left:20.5px;top:1021.5px;color:#c4c4c4;font-size:12px;line-height:16px;letter-spacing:0.32px;">[TMP Essential Resources] have been imported.</span>
<div style="left:1816px;top:1020px;width:1px;height:20px;background:#272727;"></div>
<div style="left:1842px;top:1020px;width:1px;height:20px;background:#272727;"></div>
<div style="left:1867px;top:1020px;width:1px;height:20px;background:#272727;"></div>
<div style="left:1893px;top:1020px;width:1px;height:20px;background:#272727;"></div>
<svg style="left:1821px;top:1022.5px;" width="15" height="15" viewBox="0 0 15 15"><ellipse cx="7.500" cy="9" rx="4.400" ry="5.200" fill="#b4b4b4"/><circle cx="7.500" cy="3.800" r="2.600" fill="#b4b4b4"/><path d="M1.200 5.500L4 7.500M13.800 5.500L11 7.500M0.800 10H4M14.200 10H11M1.500 14L4.200 12M13.500 14L10.800 12M5 0.800L6.300 2.500M10 0.800L8.700 2.500" stroke="#b4b4b4" stroke-width="1.1"/><path d="M1.500 0.800L13.500 14.200" stroke="#191919" stroke-width="2.800"/><path d="M1.500 0.800L13.500 14.200" stroke="#b4b4b4" stroke-width="1.1"/></svg>
<svg style="left:1847px;top:1022.5px;" width="15" height="15" viewBox="0 0 15 15"><ellipse cx="7.5" cy="3.6" rx="5.5" ry="2.4" fill="#b4b4b4"/><path d="M2 5.2V8C2 9.4 4.4 10.4 7.5 10.4S13 9.4 13 8V5.2C13 6.6 10.6 7.4 7.5 7.4S2 6.6 2 5.2Z" fill="#b4b4b4"/><path d="M2 9.4V11.6C2 13 4.4 14 7.5 14S13 13 13 11.6V9.4C13 10.8 10.6 11.7 7.5 11.7S2 10.8 2 9.4Z" fill="#b4b4b4"/><path d="M1.5 1.5L13.5 14" stroke="#191919" stroke-width="2.6"/><path d="M1.5 1.5L13.5 14" stroke="#b4b4b4" stroke-width="1.1"/></svg>
<svg style="left:1873px;top:1022.5px;" width="15" height="15" viewBox="0 0 15 15"><path d="M2.5 6.5A5.3 5.3 0 0 1 12 4.5M12.5 8.5A5.3 5.3 0 0 1 3 10.5" stroke="#b4b4b4" stroke-width="1.3" fill="none"/><path d="M12.8 1.5V5H9.3M2.2 13.5V10H5.7" stroke="#b4b4b4" stroke-width="1.2" fill="none"/><circle cx="7.5" cy="7.5" r="1.7" fill="#b4b4b4"/><path d="M1.5 1.5L13.5 14" stroke="#191919" stroke-width="2.6"/><path d="M1.5 1.5L13.5 14" stroke="#b4b4b4" stroke-width="1.1"/></svg>
<svg style="left:1899px;top:1022.5px;" width="15" height="15" viewBox="0 0 15 15"><circle cx="7.5" cy="7.5" r="6.3" fill="none" stroke="#b4b4b4" stroke-width="1.1"/><path d="M4.6 7.6L6.8 9.8L10.6 5.4" stroke="#b4b4b4" stroke-width="1.3" fill="none"/></svg>
</div>
<div style="left:0px;top:1040px;width:1920px;height:40px;background:#1c1c1c;"></div>
<svg style="left:16px;top:1052px;" width="17" height="16" viewBox="0 0 17 16"><path d="M0 2.4L6.9 1.4V7.6H0ZM7.8 1.3L16.5 0V7.6H7.8ZM0 8.5H6.9V14.7L0 13.7ZM7.8 8.5H16.5V16L7.8 14.8Z" fill="#fff"/></svg>
<div style="left:48px;top:1040px;width:288px;height:40px;background:#353535;border:1px solid #5a5a5a;border-bottom:none;"></div>
<svg style="left:60px;top:1052px;" width="17" height="16" viewBox="0 0 17 16"><circle cx="10.4" cy="6" r="5" fill="none" stroke="#fff" stroke-width="1.3"/><path d="M6.8 9.6L1 15.4" stroke="#fff" stroke-width="1.4"/></svg>
<span class="lcd" style="left:88.5px;top:1050px;color:#fff;font-size:14.5px;line-height:20px;letter-spacing:-0.05px;">Escriu aquí per cercar</span>
<svg style="left:256px;top:1041px;" width="80" height="39" viewBox="0 0 80 39"><path d="M1.500 36L12.400 25H69.300L79.500 36Z" fill="#e8c79b"/><path d="M1.500 36H79.500V39H1.500Z" fill="#d9b688"/><ellipse cx="29" cy="32" rx="14" ry="2.200" fill="#d2ad7e"/><path d="M13 17L26 10.500L36 9.500L40 26L28 30L17.500 33.500Z" fill="#3fae49"/><path d="M14.500 16.500L25.800 11L28 28.500L18 32Z" fill="#f3f0fa"/><path d="M25.800 11L35.500 10L39 25.500L28 28.500Z" fill="#e6e1f3"/><path d="M17 18.500L24.500 15M17.500 21L25 17.500M18 23.500L25.400 20M18.500 26L25.800 22.500M19 28.500L26.200 25M28 14.500L34.500 13M28.500 17L35 15.500M29 19.500L35.600 18M29.500 22L36.200 20.500M30 24.500L36.800 23" stroke="#c9c3da" stroke-width="0.700"/><path d="M32.300 18.700L39.800 8.300L43 10.600L35.500 21L32 22Z" fill="#f7b72b"/><path d="M39.800 8.300L41.800 5.600L45 7.900L43 10.600Z" fill="#f05b4a"/><path d="M39 9.400L40 8L43.200 10.300L42.200 11.700Z" fill="#e9d7e6"/><path d="M32 22L32.300 18.700L35.500 21Z" fill="#e8a58a"/><circle cx="59.500" cy="5.800" r="2.600" stroke="#1a6fe8" stroke-width="1.500" fill="none"/><path d="M50 16C50 3 69 3 69 16V29Q69 32.500 65.500 32.500H53.500Q50 32.500 50 29Z" fill="#0f75f2"/><path d="M51 13.500C53 5.500 66 5.500 68 13.500" stroke="#b9a5f0" stroke-width="0.800" fill="none"/><path d="M52 30V26C52 16.500 67 16.500 67 26V30Q67 31.500 65.500 31.500H53.500Q52 31.500 52 30Z" fill="#0c5cf0"/><path d="M52.500 28.300Q59.500 30.800 66.500 28.300V30Q66.500 31.500 65 31.500H54Q52.500 31.500 52.500 30Z" fill="#d680ff"/><path d="M53 24.500V26.500" stroke="#dfe8ff" stroke-width="1.200" stroke-linecap="round"/></svg>
<svg style="left:352px;top:1053px;" width="16" height="16" viewBox="0 0 16 16"><circle cx="8" cy="7.6" r="6.6" fill="none" stroke="#fff" stroke-width="2"/></svg>
<svg style="left:399px;top:1052px;" width="18" height="16" viewBox="0 0 18 16"><path d="M1 0.8H12M1 15.2H12" stroke="#fff" stroke-width="1.3"/><rect x="1.6" y="4.2" width="9.8" height="7.6" fill="none" stroke="#fff" stroke-width="1.3"/><path d="M15.6 0.4V3M15.6 5V15.6" stroke="#fff" stroke-width="1.4"/></svg>
<svg style="left:447px;top:1048px;" width="25" height="24" viewBox="0 0 25 24"><rect x="0" y="0" width="24.5" height="23.5" rx="3.5" fill="#f47a20"/><path d="M6 5.5C8.5 5.5 9.5 8 12.2 8S16 5.5 18.5 5.5C21.5 5.500 21.8 9.500 19.300 11.800C21.800 14.000 21.500 18.000 18.500 18.000C16 18 15 15.500 12.200 15.500S8.500 18.000 6 18.000C3.000 18.000 2.700 14.000 5.200 11.800C2.700 9.500 3.000 5.500 6 5.500Z" fill="#fff"/><path d="M7 9.200C8.500 10.800 8.500 12.800 7 14.300M17.500 9.200C16 10.800 16 12.800 17.500 14.300" stroke="#f47a20" stroke-width="1.500" fill="none"/><path d="M10.800 11.800H13.800" stroke="#f47a20" stroke-width="1.500"/></svg>
<svg style="left:496px;top:1050px;" width="23" height="20" viewBox="0 0 23 20"><path d="M0.500 3.200Q0.500 1.500 2 1.500H7.500L9.500 3.500H20.500Q22 3.500 22 5V17.500Q22 19 20.500 19H2Q0.500 19 0.500 17.500Z" fill="#f6c445"/><path d="M0.500 6.500H22V17.500Q22 19 20.500 19H2Q0.500 19 0.500 17.500Z" fill="#fbd970"/><path d="M5.500 19V13H17V19H14V15.800H8.500V19Z" fill="#3b8fe0"/></svg>
<svg style="left:545px;top:1048px;" width="24" height="24" viewBox="0 0 24 24"><circle cx="12" cy="12" r="11.800" fill="#fff"/><path d="M12 12L1.800 6.100A11.800 11.800 0 0 1 22.200 6.100Z" fill="#e33b2e"/><path d="M12 12L22.200 6.100A11.800 11.800 0 0 1 12 23.800Z" fill="#f7c21b"/><path d="M12 12L12 23.800A11.800 11.800 0 0 1 1.800 6.100Z" fill="#2da14c"/><path d="M12 6.400H22.200A11.800 11.800 0 0 0 1.800 6.100L6.900 14.900Z" fill="#e33b2e"/><path d="M16.800 15L12 23.800A11.800 11.800 0 0 0 22.300 6.400H12Z" fill="#f7c21b"/><path d="M7.100 14.900L1.800 6.100A11.800 11.800 0 0 0 12 23.800L16.900 14.900Z" fill="#2da14c"/><circle cx="12" cy="12" r="5.600" fill="#fff"/><circle cx="12" cy="12" r="4.400" fill="#3d7fe6"/></svg>
<svg style="left:593px;top:1048px;" width="26" height="24" viewBox="0 0 26 24"><path d="M18.500 0.500L24.500 3.300V20.700L18.500 23.500L6 12Z" fill="#2aa6f2"/><path d="M18.500 0.500V23.500L24.500 20.700V3.300Z" fill="#1f8ad2"/><path d="M18.500 6.500L3.300 18.500L0.800 16.700L18.500 0.500Z" fill="#1679c4"/><path d="M18.500 17.500L3.300 5.500L0.800 7.300L18.500 23.500Z" fill="#2489d6"/><path d="M18.500 6.800V17.200L11.500 12Z" fill="#1c1c1c"/></svg>
<div style="left:631px;top:1040px;width:48px;height:38px;background:#484848;"></div>
<div style="left:631px;top:1077.5px;width:48px;height:2.5px;background:#76b9ed;"></div>
<svg style="left:644px;top:1047px;" width="22" height="25" viewBox="0 0 22 25"><path d="M1 7L10.8 1.3L20.5 6.8L17.5 8.6L10.8 4.8L4.2 8.7Z" fill="#8c8c8c"/><path d="M17.4 8H20.8V18.2L11.1 24V20.5L17.4 17Z" fill="#000"/><path d="M10.8 4.6L17.6 8.4V16.8L10.8 20.8L4 16.800V8.400Z" fill="#fff"/><path d="M10.8 6.400L12.900 7.600L10.800 9L8.700 7.600Z" fill="#8c8c8c"/><path d="M6.300 10.600L9.300 12.200V15.600L6.300 13.900Z" fill="#3a3a3a"/><path d="M15.300 10.600L12.300 12.200V15.600L15.300 13.900Z" fill="#222"/></svg>
<svg style="left:693px;top:1048px;" width="23" height="23" viewBox="0 0 23 23"><rect x="0.850" y="0.850" width="20.700" height="20.300" fill="#0b0a5c" stroke="#8ec5fc" stroke-width="1.700"/></svg>
<span style="left:693px;top:1051px;color:#8ec5fc;font-size:14px;line-height:16px;width:22px;text-align:center;font-weight:bold;transform:scaleX(0.8);">Ps</span>
<div style="left:684px;top:1077.5px;width:40px;height:2.5px;background:#76b9ed;"></div>
<svg style="left:1478px;top:1050px;" width="27" height="22" viewBox="0 0 27 22"><circle cx="16.500" cy="7.500" r="5.500" fill="#f6a623"/><path d="M6 20.500A4.800 4.800 0 0 1 5.500 11A6.500 6.500 0 0 1 17.800 10A5.300 5.300 0 0 1 19.500 20.500Z" fill="#e8f1fb"/><path d="M6 20.500A4.800 4.800 0 0 1 2 14C5 18 18 18.500 24 14.500A5.300 5.300 0 0 1 19.500 20.500Z" fill="#a9c8ee"/></svg>
<span class="lcd" style="left:1511px;top:1051px;color:#fff;font-size:14px;line-height:20px;letter-spacing:-0.9px;">18°C</span>
<span class="lcd" style="left:1549px;top:1051px;color:#fff;font-size:14px;line-height:20px;letter-spacing:-0.05px;">Mayorm. nubla...</span>
<svg style="left:1676px;top:1056px;" width="14" height="8" viewBox="0 0 14 8"><path d="M0.700 7.300L7 1L13.300 7.300" stroke="#fff" stroke-width="1.300" fill="none"/></svg>
<svg style="left:1698px;top:1054px;" width="18" height="12" viewBox="0 0 18 12"><rect x="4.500" y="2.500" width="11" height="7" fill="none" stroke="#fff" stroke-width="1.100"/><rect x="16" y="4.500" width="1.500" height="3" fill="#fff"/><path d="M2.500 0V3M0.800 3H4.200V5.500Q4.200 7 2.500 7T0.800 5.500ZM2.500 7V9.500H5" stroke="#fff" stroke-width="1" fill="none"/><rect x="6" y="4" width="8" height="4" fill="#fff"/></svg>
<svg style="left:1726px;top:1054px;" width="14" height="14" viewBox="0 0 14 14"><path d="M1 12A11 11 0 0 1 12 1" stroke="#8a8a8a" stroke-width="1.200" fill="none"/><path d="M4 12A8 8 0 0 1 12 4" stroke="#fff" stroke-width="1.200" fill="none"/><path d="M7 12A5 5 0 0 1 12 7" stroke="#fff" stroke-width="1.200" fill="none"/><circle cx="11" cy="11.500" r="1.500" fill="#fff"/></svg>
<svg style="left:1747px;top:1053px;" width="18" height="14" viewBox="0 0 18 14"><path d="M0.600 4.500H3.500L7.500 0.800V13.200L3.500 9.500H0.600Z" fill="none" stroke="#fff" stroke-width="1.100"/><path d="M10 4.500C11.200 6 11.200 8 10 9.500M12.300 2.500C14.500 5 14.500 9 12.300 11.500M14.600 0.800C17.600 4 17.600 10 14.600 13.200" stroke="#fff" stroke-width="1.100" fill="none"/></svg>
<span style="left:1774.5px;top:1052px;color:#fff;font-size:11px;line-height:16px;letter-spacing:-0.4px;">CAT</span>
<span style="left:1806px;top:1043px;color:#fff;font-size:11px;line-height:16px;width:58px;text-align:center;letter-spacing:-0.25px;">14:04</span>
<span style="left:1806px;top:1061px;color:#fff;font-size:11.5px;line-height:16px;width:58px;text-align:center;letter-spacing:-0.3px;">19/2/2024</span>
<svg style="left:1879px;top:1052px;" width="17" height="16" viewBox="0 0 17 16"><path d="M0.500 0.500H16V11.500H10.500L8.200 14.500L6 11.500H0.500Z" fill="#fff"/><path d="M3 3.500H13.500M3 6H13.500M3 8.500H10" stroke="#1c1c1c" stroke-width="1"/></svg>
<div style="left:1915px;top:1040px;width:1px;height:40px;background:#5a5a5a;"></div>
</body></html>
